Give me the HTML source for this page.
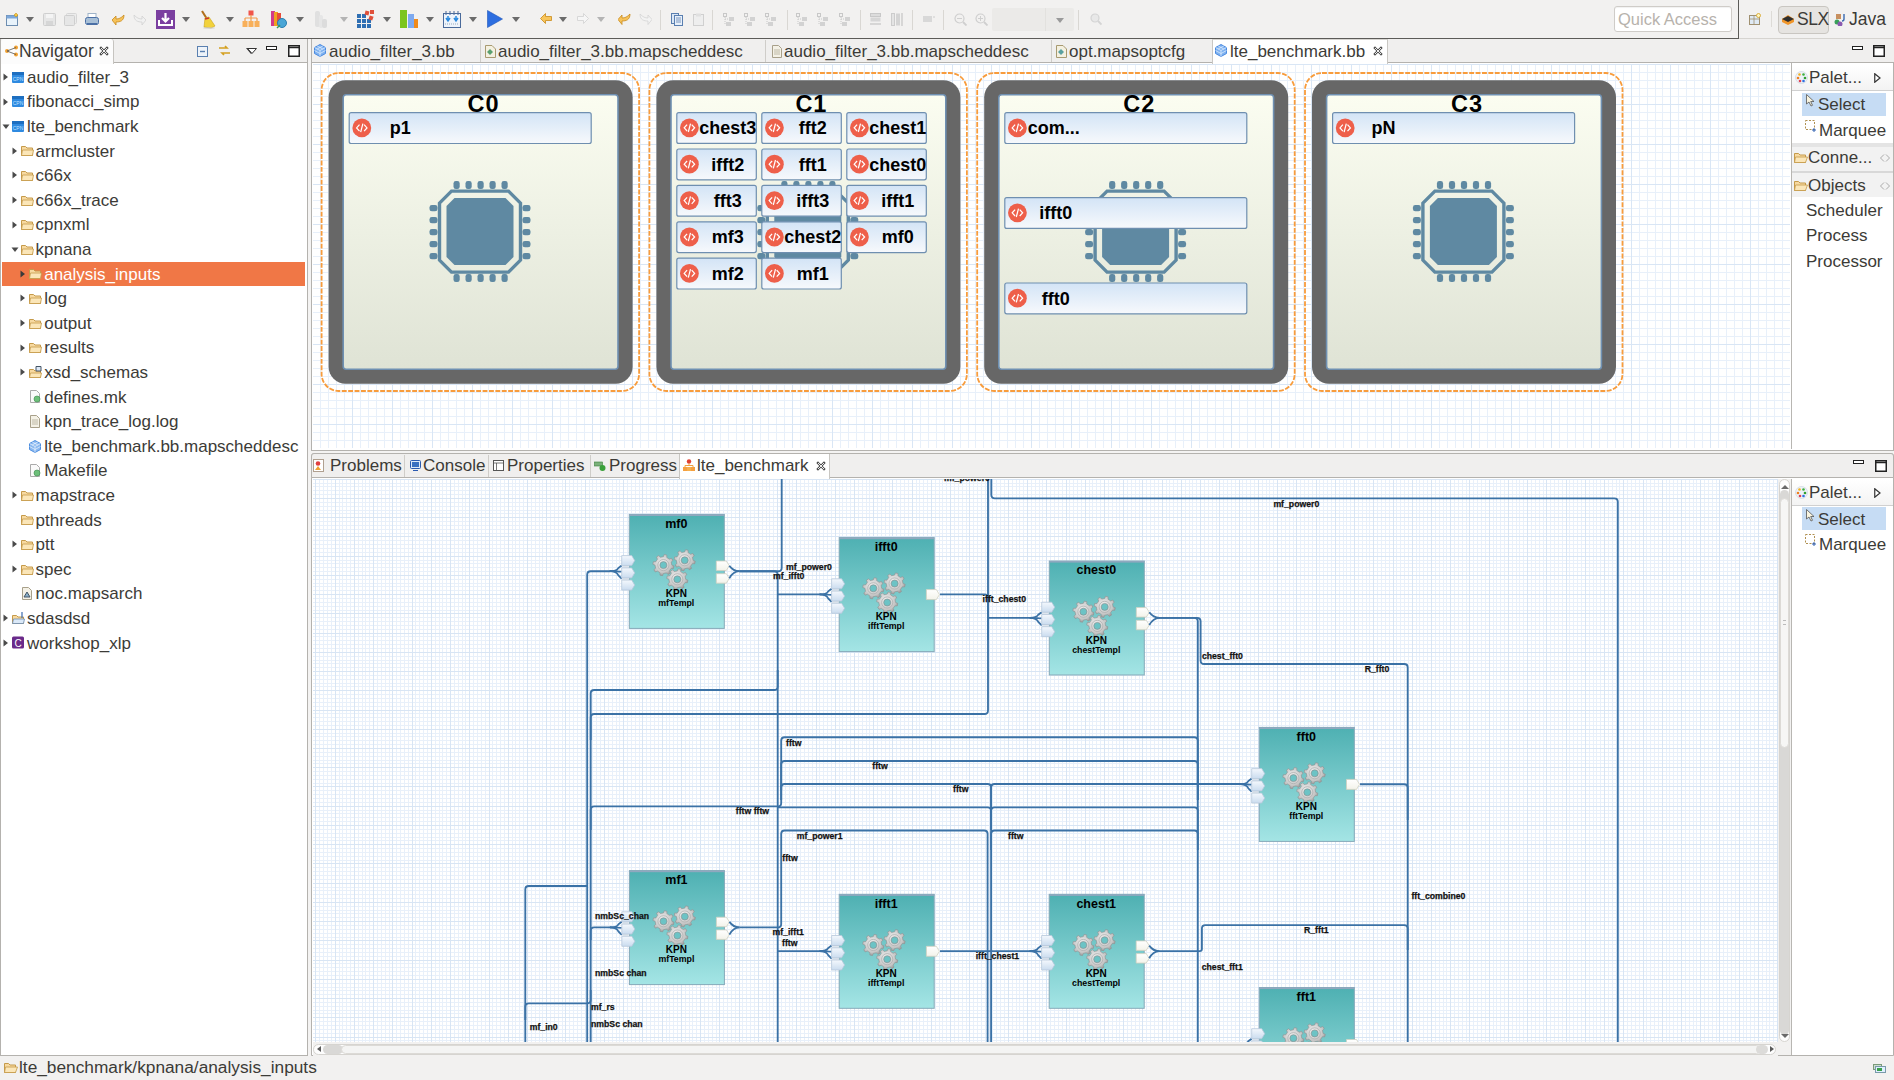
<!DOCTYPE html><html><head><meta charset="utf-8"><style>
*{box-sizing:border-box;margin:0;padding:0}
html,body{width:1894px;height:1080px;overflow:hidden;background:#f2f1f0;font-family:"Liberation Sans",sans-serif;color:#3c3b37}
.a{position:absolute}
.t{position:absolute;white-space:nowrap;line-height:1}
.ui{font-size:17.5px;color:#3c3b37}
.dd{position:absolute;width:0;height:0;border-left:4px solid transparent;border-right:4px solid transparent;border-top:5px solid #6b6b6b}
.sep{position:absolute;width:1px;top:10px;height:20px;background:#d9d7d3}
</style></head><body>
<div class="a" style="left:0;top:0;width:1894px;height:38px;background:#f2f1f0"></div>
<div class="a" style="left:0;top:38px;width:1739px;height:1px;background:#5c5b58"></div>
<div class="a" style="left:1738px;top:0;width:1px;height:39px;background:#5c5b58"></div>
<div class="a" style="left:1739px;top:38px;width:1155px;height:1px;background:#d6d4d0"></div>
<svg class="a" style="left:6px;top:13px" width="14" height="13" viewBox="0 0 14 13"><rect x="0.5" y="2.5" width="11" height="10" fill="#e9f3fb" stroke="#6d8db0"/><rect x="0.5" y="2.5" width="11" height="3" fill="#7da7d9"/><path d="M10 0 l2 2 l-2 2 l-2 -2z" fill="#f5c542" stroke="#b8860b" stroke-width="0.5"/></svg>
<div class="dd" style="left:26px;top:17px;border-top-color:#6b6b6b"></div>
<svg class="a" style="left:43px;top:13px" width="13" height="13" viewBox="0 0 13 13"><rect x="0.5" y="0.5" width="12" height="12" rx="1" fill="#e6e6e6" stroke="#cfcfcf"/><rect x="3" y="1" width="7" height="4" fill="#f4f4f4"/><rect x="3" y="8" width="7" height="4" fill="#d6d6d6"/></svg>
<svg class="a" style="left:64px;top:13px" width="13" height="13" viewBox="0 0 13 13"><rect x="2.5" y="0.5" width="10" height="10" rx="1" fill="#ececec" stroke="#d6d6d6"/><rect x="0.5" y="2.5" width="10" height="10" rx="1" fill="#e6e6e6" stroke="#cfcfcf"/></svg>
<svg class="a" style="left:85px;top:13px" width="14" height="13" viewBox="0 0 14 13"><rect x="3" y="0.5" width="8" height="5" fill="#fff" stroke="#9fb3c8"/><rect x="0.5" y="4.5" width="13" height="7" rx="2" fill="#a8bfd6" stroke="#4a6fa5"/><rect x="2" y="10" width="10" height="2" fill="#4a6fa5"/></svg>
<svg class="a" style="left:112px;top:14px" width="13" height="11" viewBox="0 0 13 11"><path d="M12 1 C12 7 8 8 4 8 L4 11 L0 6 L4 2 L4 5 C7 5 9 4 12 1z" fill="#f6c25a" stroke="#c98a1b" stroke-width="0.8"/></svg>
<svg class="a" style="left:133px;top:14px" width="13" height="11" viewBox="0 0 13 11"><path d="M1 1 C1 7 5 8 9 8 L9 11 L13 6 L9 2 L9 5 C6 5 4 4 1 1z" fill="#f1f1f1" stroke="#d2d2d2" stroke-width="0.8"/></svg>
<svg class="a" style="left:156px;top:10px" width="19" height="19" viewBox="0 0 19 19"><rect width="19" height="19" fill="#7b3fa0"/><path d="M3 10 V15 H16 V10" fill="none" stroke="#fff" stroke-width="2"/><path d="M9.5 3 V11 M6 8 L9.5 11.5 L13 8" fill="none" stroke="#fff" stroke-width="2.2"/></svg>
<div class="dd" style="left:182px;top:17px;border-top-color:#6b6b6b"></div>
<svg class="a" style="left:199px;top:10px" width="17" height="19" viewBox="0 0 17 19"><path d="M3 1 L8 9" stroke="#b0701c" stroke-width="2"/><path d="M6 8 L10 7 L16 16 L12 18 L5 17z" fill="#f2d23c" stroke="#c7a21a" stroke-width="0.6"/><path d="M6 9 L10 8" stroke="#c83232" stroke-width="1.6"/><ellipse cx="10" cy="18" rx="6" ry="1" fill="#ccc" opacity="0.6"/></svg>
<div class="dd" style="left:226px;top:17px;border-top-color:#6b6b6b"></div>
<svg class="a" style="left:242px;top:10px" width="18" height="18" viewBox="0 0 18 18"><rect x="6.5" y="0.5" width="5" height="5" fill="#f0554a"/><path d="M9 5 V8 M3 8 H15 M3 8 V11 M9 8 V11 M15 8 V11" stroke="#f29b4a" stroke-width="1.2" fill="none"/><rect x="0.5" y="11" width="5" height="6" fill="#f8b05a"/><rect x="6.5" y="11" width="5" height="6" fill="#f8b05a"/><rect x="12.5" y="11" width="5" height="6" fill="#f8b05a"/></svg>
<svg class="a" style="left:270px;top:10px" width="17" height="19" viewBox="0 0 17 19"><rect x="1" y="1" width="4" height="15" fill="#d23a8a"/><rect x="4" y="2" width="4" height="14" fill="#f0a020"/><rect x="7" y="3" width="4" height="12" fill="#e84b3a"/><circle cx="12" cy="13" r="4.5" fill="#4aa6d6" stroke="#2a7fb0"/><path d="M7 18 L10 15" stroke="#3a9a5a" stroke-width="1.5"/></svg>
<div class="dd" style="left:296px;top:17px;border-top-color:#6b6b6b"></div>
<svg class="a" style="left:314px;top:10px" width="14" height="19" viewBox="0 0 14 19"><rect x="1" y="1" width="5" height="16" rx="2" fill="#e0e0e0"/><rect x="5" y="5" width="4" height="13" rx="2" fill="#e6e6e6"/><rect x="8" y="9" width="5" height="9" rx="2" fill="#dcdcdc"/></svg>
<div class="dd" style="left:340px;top:17px;border-top-color:#b4b4b4"></div>
<svg class="a" style="left:357px;top:10px" width="17" height="18" viewBox="0 0 17 18"><g fill="#2f6fb3"><rect x="0" y="4" width="4" height="4"/><rect x="5" y="4" width="4" height="4"/><rect x="0" y="9" width="4" height="4"/><rect x="5" y="9" width="4" height="4"/><rect x="10" y="9" width="4" height="4"/><rect x="0" y="14" width="4" height="4"/><rect x="5" y="14" width="4" height="4"/><rect x="10" y="14" width="4" height="4"/></g><g fill="#e0503a"><rect x="8" y="1" width="4" height="4" transform="rotate(15 10 3)"/><rect x="13" y="0" width="4" height="4"/><rect x="12" y="6" width="4" height="4" transform="rotate(20 14 8)"/></g></svg>
<div class="dd" style="left:383px;top:17px;border-top-color:#6b6b6b"></div>
<svg class="a" style="left:400px;top:10px" width="18" height="19" viewBox="0 0 18 19"><rect x="0" y="0" width="7" height="18" fill="#7cc51e"/><rect x="8" y="4" width="6" height="14" fill="#7eaaf0"/><rect x="14" y="9" width="4" height="9" fill="#f08a1a"/></svg>
<div class="dd" style="left:426px;top:17px;border-top-color:#6b6b6b"></div>
<svg class="a" style="left:443px;top:10px" width="18" height="18" viewBox="0 0 18 18"><rect x="0.5" y="3.5" width="17" height="14" fill="#eef4fb" stroke="#4a6a9a"/><path d="M3 1 V5 M7 1 V5 M11 1 V5 M15 1 V5" stroke="#4a6a9a"/><path d="M5 6 V10 M3 8 L5 11 L7 8 M13 6 V10 M11 8 L13 11 L15 8" stroke="#2a8ae0" stroke-width="1.5" fill="none"/><path d="M2 14 H16" stroke="#9ab" stroke-dasharray="1 1"/></svg>
<div class="dd" style="left:469px;top:17px;border-top-color:#6b6b6b"></div>
<svg class="a" style="left:487px;top:10px" width="16" height="18" viewBox="0 0 16 18"><path d="M0.5 0.5 L15.5 9 L0.5 17.5z" fill="#2d6ee0" stroke="#1f55b8" stroke-width="0.6"/></svg>
<div class="dd" style="left:512px;top:17px;border-top-color:#6b6b6b"></div>
<svg class="a" style="left:540px;top:13px" width="12" height="11" viewBox="0 0 12 11"><path d="M0.5 5.5 L5.5 0.5 V3.5 H11.5 V7.5 H5.5 V10.5z" fill="#f8c55a" stroke="#c98a1b" stroke-width="0.8"/></svg>
<div class="dd" style="left:559px;top:17px;border-top-color:#6b6b6b"></div>
<svg class="a" style="left:577px;top:13px" width="12" height="11" viewBox="0 0 12 11"><path d="M11.5 5.5 L6.5 0.5 V3.5 H0.5 V7.5 H6.5 V10.5z" fill="#f6f6f6" stroke="#d0d0d0" stroke-width="0.8"/></svg>
<div class="dd" style="left:597px;top:17px;border-top-color:#b4b4b4"></div>
<svg class="a" style="left:618px;top:13px" width="13" height="12" viewBox="0 0 13 12"><path d="M12 1 C12 7 8 8 4 8 L4 11.5 L0 6.5 L4 2 L4 5 C7 5 9 4 12 1z" fill="#f6c25a" stroke="#c98a1b" stroke-width="0.8"/></svg>
<svg class="a" style="left:639px;top:13px" width="13" height="12" viewBox="0 0 13 12"><path d="M1 1 C1 7 5 8 9 8 L9 11.5 L13 6.5 L9 2 L9 5 C6 5 4 4 1 1z" fill="#f3f3f3" stroke="#d4d4d4" stroke-width="0.8"/></svg>
<div class="sep" style="left:660px"></div>
<svg class="a" style="left:671px;top:13px" width="12" height="13" viewBox="0 0 12 13"><rect x="0.5" y="0.5" width="7" height="10" fill="#dbe7f5" stroke="#5a7fb0"/><rect x="3.5" y="2.5" width="8" height="10" fill="#e8f0fa" stroke="#5a7fb0"/><path d="M5 5 H10 M5 7 H10 M5 9 H10" stroke="#5a7fb0" stroke-width="0.8"/></svg>
<svg class="a" style="left:693px;top:13px" width="11" height="13" viewBox="0 0 11 13"><rect x="0.5" y="1.5" width="10" height="11" fill="#eeeeee" stroke="#d0d0d0"/><rect x="3" y="0.5" width="5" height="3" fill="#e0e0e0"/></svg>
<div class="sep" style="left:712px"></div>
<svg class="a" style="left:723px;top:13px" width="12" height="13" viewBox="0 0 12 13"><rect x="0.5" y="0.5" width="3" height="3" fill="none" stroke="#c8c8c8"/><rect x="6" y="4" width="5" height="4" fill="#d2d2d2"/><rect x="3" y="9" width="5" height="4" fill="#d2d2d2"/><path d="M2 6 H6 M2 4 V12" stroke="#c8c8c8" stroke-dasharray="1 1"/></svg>
<svg class="a" style="left:744px;top:13px" width="12" height="13" viewBox="0 0 12 13"><rect x="0.5" y="0.5" width="3" height="3" fill="none" stroke="#c8c8c8"/><rect x="6" y="4" width="5" height="4" fill="#d2d2d2"/><rect x="3" y="9" width="5" height="4" fill="#d2d2d2"/><path d="M2 6 H6 M2 4 V12" stroke="#c8c8c8" stroke-dasharray="1 1"/></svg>
<svg class="a" style="left:765px;top:13px" width="12" height="13" viewBox="0 0 12 13"><rect x="0.5" y="0.5" width="3" height="3" fill="none" stroke="#c8c8c8"/><rect x="6" y="4" width="5" height="4" fill="#d2d2d2"/><rect x="3" y="9" width="5" height="4" fill="#d2d2d2"/><path d="M2 6 H6 M2 4 V12" stroke="#c8c8c8" stroke-dasharray="1 1"/></svg>
<svg class="a" style="left:796px;top:13px" width="12" height="13" viewBox="0 0 12 13"><rect x="0.5" y="0.5" width="3" height="3" fill="none" stroke="#c8c8c8"/><rect x="6" y="4" width="5" height="4" fill="#d2d2d2"/><rect x="3" y="9" width="5" height="4" fill="#d2d2d2"/><path d="M2 6 H6 M2 4 V12" stroke="#c8c8c8" stroke-dasharray="1 1"/></svg>
<svg class="a" style="left:817px;top:13px" width="12" height="13" viewBox="0 0 12 13"><rect x="0.5" y="0.5" width="3" height="3" fill="none" stroke="#c8c8c8"/><rect x="6" y="4" width="5" height="4" fill="#d2d2d2"/><rect x="3" y="9" width="5" height="4" fill="#d2d2d2"/><path d="M2 6 H6 M2 4 V12" stroke="#c8c8c8" stroke-dasharray="1 1"/></svg>
<svg class="a" style="left:839px;top:13px" width="12" height="13" viewBox="0 0 12 13"><rect x="0.5" y="0.5" width="3" height="3" fill="none" stroke="#c8c8c8"/><rect x="6" y="4" width="5" height="4" fill="#d2d2d2"/><rect x="3" y="9" width="5" height="4" fill="#d2d2d2"/><path d="M2 6 H6 M2 4 V12" stroke="#c8c8c8" stroke-dasharray="1 1"/></svg>
<div class="sep" style="left:787px"></div>
<div class="sep" style="left:860px"></div>
<svg class="a" style="left:870px;top:13px" width="11" height="13" viewBox="0 0 11 13"><rect x="0.5" y="0.5" width="10" height="3" fill="#dcdcdc" stroke="#c8c8c8"/><rect x="0.5" y="4.5" width="10" height="4" fill="#d6d6d6"/><path d="M0 11 H11" stroke="#bbb"/></svg>
<svg class="a" style="left:891px;top:13px" width="12" height="13" viewBox="0 0 12 13"><rect x="0.5" y="0.5" width="3" height="12" fill="#e4e4e4" stroke="#ccc"/><rect x="5" y="0.5" width="4" height="12" fill="#d4d4d4"/><path d="M11 0 V13" stroke="#bbb"/></svg>
<div class="sep" style="left:912px"></div>
<svg class="a" style="left:923px;top:16px" width="12" height="6" viewBox="0 0 12 6"><rect x="0" y="0" width="9" height="6" fill="#d8d8d8"/><path d="M10 1 H12" stroke="#ccc"/></svg>
<div class="sep" style="left:943px"></div>
<svg class="a" style="left:954px;top:13px" width="13" height="13" viewBox="0 0 13 13"><circle cx="5.5" cy="5.5" r="4.5" fill="none" stroke="#cfcfcf" stroke-width="1.2"/><path d="M3 5.5 H8" stroke="#cfcfcf"/><path d="M9 9 L12.5 12.5" stroke="#cfcfcf" stroke-width="1.8"/></svg>
<svg class="a" style="left:975px;top:13px" width="13" height="13" viewBox="0 0 13 13"><circle cx="5.5" cy="5.5" r="4.5" fill="none" stroke="#cfcfcf" stroke-width="1.2"/><path d="M3 5.5 H8 M5.5 3 V8" stroke="#cfcfcf"/><path d="M9 9 L12.5 12.5" stroke="#cfcfcf" stroke-width="1.8"/></svg>
<div class="a" style="left:992px;top:8px;width:82px;height:23px;background:#ebeae8;border-radius:2px"></div>
<div class="a" style="left:1045px;top:8px;width:1px;height:23px;background:#e2e1de"></div>
<div class="dd" style="left:1056px;top:18px;border-top-color:#9a9a9a"></div>
<div class="sep" style="left:1078px"></div>
<svg class="a" style="left:1090px;top:13px" width="12" height="13" viewBox="0 0 12 13"><circle cx="5" cy="5" r="4" fill="#e8e8e8" stroke="#d4d4d4" stroke-width="1.2"/><path d="M8 8 L11.5 11.5" stroke="#d4d4d4" stroke-width="1.8"/></svg>
<div class="a" style="left:1614px;top:6px;width:118px;height:26px;background:#fff;border:1px solid #cfccc8;border-radius:3px;box-shadow:inset 0 1px 1px rgba(0,0,0,0.06)"></div>
<div class="t" style="left:1618px;top:11px;font-size:16.5px;color:#b7b2ac">Quick Access</div>
<svg class="a" style="left:1749px;top:13px" width="12" height="12" viewBox="0 0 12 12"><rect x="0.5" y="2.5" width="10" height="9" fill="#dfeaf5" stroke="#a09070"/><path d="M0.5 6 H10.5 M5 2.5 V11.5" stroke="#a09070" stroke-width="0.8"/><circle cx="9.5" cy="2.5" r="2" fill="#fff6c0" stroke="#d4a020" stroke-width="0.8"/></svg>
<div class="a" style="left:1771px;top:11px;width:1px;height:16px;background:#dddbd7"></div>
<div class="a" style="left:1778px;top:6px;width:51px;height:28px;background:#e6e4e1;border:1px solid #c9c6c1;border-radius:4px"></div>
<svg class="a" style="left:1782px;top:15px" width="12" height="10" viewBox="0 0 12 10"><path d="M0 4 L6 0 L12 4 L12 7 L6 10 L0 7z" fill="#f0962a"/><path d="M0 4 L6 1 L12 4 L6 7z" fill="#2e2e2e"/></svg>
<div class="t" style="left:1797px;top:11px;font-size:17.5px;color:#3c3b37;letter-spacing:-0.5px">SLX</div>
<svg class="a" style="left:1834px;top:13px" width="12" height="13" viewBox="0 0 12 13"><circle cx="3" cy="9" r="2.5" fill="#3aa05a"/><circle cx="6" cy="11" r="2.5" fill="#8a5ab0"/><rect x="2" y="1" width="5" height="5" fill="#c89060"/><path d="M10 1 V6 Q10 8 8 8" stroke="#3a6ab0" stroke-width="1.4" fill="none"/></svg>
<div class="t" style="left:1849px;top:11px;font-size:17.5px;color:#3c3b37">Java</div>
<div class="a" style="left:0;top:39px;width:308px;height:1017px;background:#fff;border-right:1px solid #b4b2ae;border-left:1px solid #b4b2ae;border-bottom:1px solid #b4b2ae"></div>
<div class="a" style="left:0;top:39px;width:308px;height:24px;background:#f0efee;border-bottom:1px solid #b4b2ae;border-left:1px solid #b4b2ae;border-right:1px solid #b4b2ae"></div>
<div class="a" style="left:1px;top:39px;width:113px;height:25px;background:#fcfcfc;border-right:1px solid #c6c4c0;border-radius:3px 3px 0 0"></div>
<svg class="a" style="left:4px;top:45px" width="15" height="12" viewBox="0 0 15 12"><circle cx="3" cy="6" r="2" fill="#f0a030"/><circle cx="12" cy="2.5" r="2" fill="#f0a030"/><circle cx="12" cy="9.5" r="2" fill="#f0a030"/><path d="M3 6 L12 2.5 M3 6 L12 9.5" stroke="#555" stroke-width="0.8"/></svg>
<div class="t ui" style="left:19px;top:43px;font-size:17.5px">Navigator</div>
<svg class="a" style="left:99px;top:46px" width="10" height="10" viewBox="0 0 10 10"><path d="M2 2 L8 8 M8 2 L2 8" stroke="#4a4a4a" stroke-width="2.4" stroke-linecap="square"/><path d="M2 2 L8 8 M8 2 L2 8" stroke="#fff" stroke-width="0.9" /></svg>
<svg class="a" style="left:197px;top:46px" width="11" height="11" viewBox="0 0 11 11"><rect x="0.5" y="0.5" width="10" height="10" fill="#eef3f9" stroke="#5a80b0"/><path d="M3 5.5 H8" stroke="#5a80b0" stroke-width="1.4"/></svg>
<svg class="a" style="left:218px;top:44px" width="13" height="13" viewBox="0 0 13 13"><path d="M1 4 H9 L7 2 M12 9 H4 L6 11" stroke="#d4a020" stroke-width="1.6" fill="none"/></svg>
<div class="dd" style="left:246px;top:48px;border-left-width:5px;border-right-width:5px;border-top:6px solid #333;"></div>
<svg class="a" style="left:247px;top:48px" width="10" height="6" viewBox="0 0 10 6"><path d="M0.5 0.5 H9.5 L5 5.5z" fill="#fff" stroke="#333"/></svg>
<svg class="a" style="left:266px;top:46px" width="11" height="4" viewBox="0 0 11 4"><rect x="0.5" y="0.5" width="10" height="3" fill="#fff" stroke="#222"/></svg>
<svg class="a" style="left:288px;top:45px" width="12" height="12" viewBox="0 0 12 12"><rect x="0.75" y="0.75" width="10.5" height="10.5" fill="#fff" stroke="#222" stroke-width="1.5"/><path d="M1 2.5 H11" stroke="#222" stroke-width="1.5"/></svg>
<svg class="a" style="left:3.0px;top:73.0px" width="6" height="8"><path d="M0.5 0.5 L5 4 L0.5 7.5z" fill="#4a4a4a"/></svg>
<svg class="a" style="left:12.0px;top:70.5px" width="13" height="13"><rect x="0" y="1" width="12" height="11" rx="1" fill="#2f8ae0"/><rect x="0" y="1" width="12" height="3" fill="#1e6fc0"/><text x="6" y="9.5" font-size="5" fill="#bfe0ff" text-anchor="middle" font-family="Liberation Sans">CPN</text></svg>
<div class="t ui" style="left:27.0px;top:68.7px;color:#3c3b37;font-size:17px">audio_filter_3</div>
<svg class="a" style="left:3.0px;top:97.6px" width="6" height="8"><path d="M0.5 0.5 L5 4 L0.5 7.5z" fill="#4a4a4a"/></svg>
<svg class="a" style="left:12.0px;top:95.1px" width="13" height="13"><rect x="0" y="1" width="12" height="11" rx="1" fill="#2f8ae0"/><rect x="0" y="1" width="12" height="3" fill="#1e6fc0"/><text x="6" y="9.5" font-size="5" fill="#bfe0ff" text-anchor="middle" font-family="Liberation Sans">CPN</text></svg>
<div class="t ui" style="left:27.0px;top:93.3px;color:#3c3b37;font-size:17px">fibonacci_simp</div>
<svg class="a" style="left:2.0px;top:124.2px" width="8" height="6"><path d="M0.5 0.5 H7.5 L4 5z" fill="#4a4a4a"/></svg>
<svg class="a" style="left:12.0px;top:119.7px" width="13" height="13"><rect x="0" y="1" width="12" height="11" rx="1" fill="#2f8ae0"/><rect x="0" y="1" width="12" height="3" fill="#1e6fc0"/><text x="6" y="9.5" font-size="5" fill="#bfe0ff" text-anchor="middle" font-family="Liberation Sans">CPN</text></svg>
<div class="t ui" style="left:27.0px;top:117.9px;color:#3c3b37;font-size:17px">lte_benchmark</div>
<svg class="a" style="left:11.6px;top:146.8px" width="6" height="8"><path d="M0.5 0.5 L5 4 L0.5 7.5z" fill="#4a4a4a"/></svg>
<svg class="a" style="left:20.6px;top:144.3px" width="13" height="13"><path d="M0.5 2.5 H4.5 L6 4 H11.5 V11.5 H0.5z" fill="#f7d9a0" stroke="#c59a4a"/><path d="M1.5 6 H12.5 L11.5 11.5 H0.5z" fill="#fbe6b8" stroke="#c59a4a" stroke-width="0.8"/></svg>
<div class="t ui" style="left:35.6px;top:142.5px;color:#3c3b37;font-size:17px">armcluster</div>
<svg class="a" style="left:11.6px;top:171.4px" width="6" height="8"><path d="M0.5 0.5 L5 4 L0.5 7.5z" fill="#4a4a4a"/></svg>
<svg class="a" style="left:20.6px;top:168.9px" width="13" height="13"><path d="M0.5 2.5 H4.5 L6 4 H11.5 V11.5 H0.5z" fill="#f7d9a0" stroke="#c59a4a"/><path d="M1.5 6 H12.5 L11.5 11.5 H0.5z" fill="#fbe6b8" stroke="#c59a4a" stroke-width="0.8"/></svg>
<div class="t ui" style="left:35.6px;top:167.1px;color:#3c3b37;font-size:17px">c66x</div>
<svg class="a" style="left:11.6px;top:196.0px" width="6" height="8"><path d="M0.5 0.5 L5 4 L0.5 7.5z" fill="#4a4a4a"/></svg>
<svg class="a" style="left:20.6px;top:193.5px" width="13" height="13"><path d="M0.5 2.5 H4.5 L6 4 H11.5 V11.5 H0.5z" fill="#f7d9a0" stroke="#c59a4a"/><path d="M1.5 6 H12.5 L11.5 11.5 H0.5z" fill="#fbe6b8" stroke="#c59a4a" stroke-width="0.8"/></svg>
<div class="t ui" style="left:35.6px;top:191.7px;color:#3c3b37;font-size:17px">c66x_trace</div>
<svg class="a" style="left:11.6px;top:220.6px" width="6" height="8"><path d="M0.5 0.5 L5 4 L0.5 7.5z" fill="#4a4a4a"/></svg>
<svg class="a" style="left:20.6px;top:218.1px" width="13" height="13"><path d="M0.5 2.5 H4.5 L6 4 H11.5 V11.5 H0.5z" fill="#f7d9a0" stroke="#c59a4a"/><path d="M1.5 6 H12.5 L11.5 11.5 H0.5z" fill="#fbe6b8" stroke="#c59a4a" stroke-width="0.8"/></svg>
<div class="t ui" style="left:35.6px;top:216.3px;color:#3c3b37;font-size:17px">cpnxml</div>
<svg class="a" style="left:10.6px;top:247.2px" width="8" height="6"><path d="M0.5 0.5 H7.5 L4 5z" fill="#4a4a4a"/></svg>
<svg class="a" style="left:20.6px;top:242.7px" width="13" height="13"><path d="M0.5 2.5 H4.5 L6 4 H11.5 V11.5 H0.5z" fill="#f7d9a0" stroke="#c59a4a"/><path d="M1.5 6 H12.5 L11.5 11.5 H0.5z" fill="#fbe6b8" stroke="#c59a4a" stroke-width="0.8"/></svg>
<div class="t ui" style="left:35.6px;top:240.9px;color:#3c3b37;font-size:17px">kpnana</div>
<div class="a" style="left:2px;top:261.6px;width:303px;height:24.4px;background:#f07746"></div>
<svg class="a" style="left:20.2px;top:269.8px" width="6" height="8"><path d="M0.5 0.5 L5 4 L0.5 7.5z" fill="#3a3a3a"/></svg>
<svg class="a" style="left:29.2px;top:267.3px" width="13" height="13"><path d="M0.5 2.5 H4.5 L6 4 H11.5 V11.5 H0.5z" fill="#f7d9a0" stroke="#c59a4a"/><path d="M1.5 6 H12.5 L11.5 11.5 H0.5z" fill="#fbe6b8" stroke="#c59a4a" stroke-width="0.8"/></svg>
<div class="t ui" style="left:44.2px;top:265.5px;color:#ffffff;font-size:17px">analysis_inputs</div>
<svg class="a" style="left:20.2px;top:294.4px" width="6" height="8"><path d="M0.5 0.5 L5 4 L0.5 7.5z" fill="#4a4a4a"/></svg>
<svg class="a" style="left:29.2px;top:291.9px" width="13" height="13"><path d="M0.5 2.5 H4.5 L6 4 H11.5 V11.5 H0.5z" fill="#f7d9a0" stroke="#c59a4a"/><path d="M1.5 6 H12.5 L11.5 11.5 H0.5z" fill="#fbe6b8" stroke="#c59a4a" stroke-width="0.8"/></svg>
<div class="t ui" style="left:44.2px;top:290.1px;color:#3c3b37;font-size:17px">log</div>
<svg class="a" style="left:20.2px;top:319.0px" width="6" height="8"><path d="M0.5 0.5 L5 4 L0.5 7.5z" fill="#4a4a4a"/></svg>
<svg class="a" style="left:29.2px;top:316.5px" width="13" height="13"><path d="M0.5 2.5 H4.5 L6 4 H11.5 V11.5 H0.5z" fill="#f7d9a0" stroke="#c59a4a"/><path d="M1.5 6 H12.5 L11.5 11.5 H0.5z" fill="#fbe6b8" stroke="#c59a4a" stroke-width="0.8"/></svg>
<div class="t ui" style="left:44.2px;top:314.7px;color:#3c3b37;font-size:17px">output</div>
<svg class="a" style="left:20.2px;top:343.6px" width="6" height="8"><path d="M0.5 0.5 L5 4 L0.5 7.5z" fill="#4a4a4a"/></svg>
<svg class="a" style="left:29.2px;top:341.1px" width="13" height="13"><path d="M0.5 2.5 H4.5 L6 4 H11.5 V11.5 H0.5z" fill="#f7d9a0" stroke="#c59a4a"/><path d="M1.5 6 H12.5 L11.5 11.5 H0.5z" fill="#fbe6b8" stroke="#c59a4a" stroke-width="0.8"/></svg>
<div class="t ui" style="left:44.2px;top:339.3px;color:#3c3b37;font-size:17px">results</div>
<svg class="a" style="left:20.2px;top:368.2px" width="6" height="8"><path d="M0.5 0.5 L5 4 L0.5 7.5z" fill="#4a4a4a"/></svg>
<svg class="a" style="left:29.2px;top:365.7px" width="13" height="13"><path d="M0.5 3.5 H4.5 L6 5 H11.5 V11.5 H0.5z" fill="#f7d9a0" stroke="#c59a4a"/><path d="M1.5 7 H12.5 L11.5 11.5 H0.5z" fill="#fbe6b8" stroke="#c59a4a" stroke-width="0.8"/><path d="M7 0.5 H12 V5 H7z" fill="#dde8f5" stroke="#456"/></svg>
<div class="t ui" style="left:44.2px;top:363.9px;color:#3c3b37;font-size:17px">xsd_schemas</div>
<svg class="a" style="left:29.2px;top:390.3px" width="13" height="13"><path d="M1.5 0.5 H7.5 L10.5 3.5 V12.5 H1.5z" fill="#fafafa" stroke="#aaa"/><circle cx="8" cy="9" r="3" fill="#6dbf7a" stroke="#3a8a4a" stroke-width="0.6"/></svg>
<div class="t ui" style="left:44.2px;top:388.5px;color:#3c3b37;font-size:17px">defines.mk</div>
<svg class="a" style="left:29.2px;top:414.9px" width="13" height="13"><path d="M1.5 0.5 H7.5 L10.5 3.5 V12.5 H1.5z" fill="#f4f1e6" stroke="#a8a08a"/><path d="M3 5 H9 M3 7 H9 M3 9 H9" stroke="#a8a08a" stroke-width="0.7"/></svg>
<div class="t ui" style="left:44.2px;top:413.1px;color:#3c3b37;font-size:17px">kpn_trace_log.log</div>
<svg class="a" style="left:29.2px;top:439.5px" width="13" height="13"><path d="M6 0.5 L11.5 3.5 V9.5 L6 12.5 L0.5 9.5 V3.5z" fill="#8ab8f0" stroke="#5090e0"/><path d="M0.5 3.5 L6 6.5 L11.5 3.5 M6 6.5 V12.5 M3.2 2 L8.8 5 M8.8 2 L3.2 5 M0.5 6.5 L6 9.5 L11.5 6.5" stroke="#fff" stroke-width="0.6" fill="none"/></svg>
<div class="t ui" style="left:44.2px;top:437.7px;color:#3c3b37;font-size:17px">lte_benchmark.bb.mapscheddesc</div>
<svg class="a" style="left:29.2px;top:464.1px" width="13" height="13"><path d="M1.5 0.5 H7.5 L10.5 3.5 V12.5 H1.5z" fill="#fafafa" stroke="#aaa"/><circle cx="8" cy="9" r="3" fill="#6dbf7a" stroke="#3a8a4a" stroke-width="0.6"/></svg>
<div class="t ui" style="left:44.2px;top:462.3px;color:#3c3b37;font-size:17px">Makefile</div>
<svg class="a" style="left:11.6px;top:491.2px" width="6" height="8"><path d="M0.5 0.5 L5 4 L0.5 7.5z" fill="#4a4a4a"/></svg>
<svg class="a" style="left:20.6px;top:488.7px" width="13" height="13"><path d="M0.5 2.5 H4.5 L6 4 H11.5 V11.5 H0.5z" fill="#f7d9a0" stroke="#c59a4a"/><path d="M1.5 6 H12.5 L11.5 11.5 H0.5z" fill="#fbe6b8" stroke="#c59a4a" stroke-width="0.8"/></svg>
<div class="t ui" style="left:35.6px;top:486.9px;color:#3c3b37;font-size:17px">mapstrace</div>
<svg class="a" style="left:20.6px;top:513.3px" width="13" height="13"><path d="M0.5 2.5 H4.5 L6 4 H11.5 V11.5 H0.5z" fill="#f7d9a0" stroke="#c59a4a"/><path d="M1.5 6 H12.5 L11.5 11.5 H0.5z" fill="#fbe6b8" stroke="#c59a4a" stroke-width="0.8"/></svg>
<div class="t ui" style="left:35.6px;top:511.5px;color:#3c3b37;font-size:17px">pthreads</div>
<svg class="a" style="left:11.6px;top:540.4px" width="6" height="8"><path d="M0.5 0.5 L5 4 L0.5 7.5z" fill="#4a4a4a"/></svg>
<svg class="a" style="left:20.6px;top:537.9px" width="13" height="13"><path d="M0.5 2.5 H4.5 L6 4 H11.5 V11.5 H0.5z" fill="#f7d9a0" stroke="#c59a4a"/><path d="M1.5 6 H12.5 L11.5 11.5 H0.5z" fill="#fbe6b8" stroke="#c59a4a" stroke-width="0.8"/></svg>
<div class="t ui" style="left:35.6px;top:536.1px;color:#3c3b37;font-size:17px">ptt</div>
<svg class="a" style="left:11.6px;top:565.0px" width="6" height="8"><path d="M0.5 0.5 L5 4 L0.5 7.5z" fill="#4a4a4a"/></svg>
<svg class="a" style="left:20.6px;top:562.5px" width="13" height="13"><path d="M0.5 2.5 H4.5 L6 4 H11.5 V11.5 H0.5z" fill="#f7d9a0" stroke="#c59a4a"/><path d="M1.5 6 H12.5 L11.5 11.5 H0.5z" fill="#fbe6b8" stroke="#c59a4a" stroke-width="0.8"/></svg>
<div class="t ui" style="left:35.6px;top:560.7px;color:#3c3b37;font-size:17px">spec</div>
<svg class="a" style="left:20.6px;top:587.1px" width="13" height="13"><path d="M1.5 0.5 H7.5 L10.5 3.5 V12.5 H1.5z" fill="#f4f1e6" stroke="#a8a08a"/><path d="M3 10 L6 5 L9 10z" fill="#8ab0c8" stroke="#456"/></svg>
<div class="t ui" style="left:35.6px;top:585.3px;color:#3c3b37;font-size:17px">noc.mapsarch</div>
<svg class="a" style="left:3.0px;top:614.2px" width="6" height="8"><path d="M0.5 0.5 L5 4 L0.5 7.5z" fill="#4a4a4a"/></svg>
<svg class="a" style="left:12.0px;top:611.7px" width="13" height="13"><path d="M0.5 3.5 H4.5 L6 5 H11.5 V11.5 H0.5z" fill="#f7d9a0" stroke="#c59a4a"/><path d="M1.5 7 H12.5 L11.5 11.5 H0.5z" fill="#dbe9f8" stroke="#6a8ab0" stroke-width="0.8"/><path d="M10 0 V6" stroke="#3a6ab0" stroke-width="1.2"/></svg>
<div class="t ui" style="left:27.0px;top:609.9px;color:#3c3b37;font-size:17px">sdasdsd</div>
<svg class="a" style="left:3.0px;top:638.8px" width="6" height="8"><path d="M0.5 0.5 L5 4 L0.5 7.5z" fill="#4a4a4a"/></svg>
<svg class="a" style="left:12.0px;top:636.3px" width="13" height="13"><rect x="0" y="0.5" width="12" height="12" rx="1.5" fill="#6a2a8a"/><text x="6" y="10.5" font-size="10" fill="#fff" text-anchor="middle" font-family="Liberation Sans">C</text></svg>
<div class="t ui" style="left:27.0px;top:634.5px;color:#3c3b37;font-size:17px">workshop_xlp</div>
<div class="a" style="left:311px;top:39px;width:1583px;height:412px;background:#fff;border-left:1px solid #b4b2ae;border-right:1px solid #b4b2ae;border-bottom:1px solid #b4b2ae"></div>
<div class="a" style="left:311px;top:39px;width:1583px;height:24px;background:#f0efee;border-left:1px solid #b4b2ae;border-bottom:1px solid #b4b2ae"></div>
<div class="a" style="left:308px;top:39px;width:3px;height:1017px;background:#f4f3f2"></div>
<div class="a" style="left:480px;top:40px;width:1px;height:22px;background:#cfcdc9"></div>
<div class="a" style="left:765px;top:40px;width:1px;height:22px;background:#cfcdc9"></div>
<div class="a" style="left:1051px;top:40px;width:1px;height:22px;background:#cfcdc9"></div>
<div class="a" style="left:1212px;top:39px;width:176px;height:25px;background:#fff;border-left:1px solid #c9c7c3;border-right:1px solid #c9c7c3;border-top:1px solid #d8d6d2"></div>
<svg class="a" style="left:314px;top:44px" width="13" height="13" viewBox="0 0 13 13"><path d="M6 0.5 L11.5 3.5 V9.5 L6 12.5 L0.5 9.5 V3.5z" fill="#7fb2f0" stroke="#4a8ae0"/><path d="M0.5 3.5 L6 6.5 L11.5 3.5 M6 6.5 V12.5 M3.2 2 L8.8 5 M8.8 2 L3.2 5 M0.5 6.5 L6 9.5 L11.5 6.5" stroke="#e8f2ff" stroke-width="0.7" fill="none"/></svg>
<div class="t ui" style="left:329px;top:43px;font-size:17px">audio_filter_3.bb</div>
<svg class="a" style="left:485px;top:45px" width="11" height="13" viewBox="0 0 11 13"><path d="M0.5 0.5 H7 L10.5 4 V12.5 H0.5z" fill="#f4f0e0" stroke="#a89a70"/><path d="M5 4 L8 7 L5 10 L2 7z" fill="#5aa070"/></svg>
<div class="t ui" style="left:498px;top:43px;font-size:17px">audio_filter_3.bb.mapscheddesc</div>
<svg class="a" style="left:772px;top:45px" width="10" height="13" viewBox="0 0 10 13"><path d="M0.5 0.5 H6.5 L9.5 3.5 V12.5 H0.5z" fill="#f4f1e6" stroke="#a8a08a"/><path d="M2 5 H8 M2 7 H8 M2 9 H8" stroke="#a8a08a" stroke-width="0.7"/></svg>
<div class="t ui" style="left:784px;top:43px;font-size:17px">audio_filter_3.bb.mapscheddesc</div>
<svg class="a" style="left:1056px;top:45px" width="11" height="13" viewBox="0 0 11 13"><path d="M0.5 0.5 H7 L10.5 4 V12.5 H0.5z" fill="#f4f0e0" stroke="#a89a70"/><path d="M5 4 L8 7 L5 10 L2 7z" fill="#5aa0a0"/></svg>
<div class="t ui" style="left:1069px;top:43px;font-size:17px">opt.mapsoptcfg</div>
<svg class="a" style="left:1215px;top:44px" width="13" height="13" viewBox="0 0 13 13"><path d="M6 0.5 L11.5 3.5 V9.5 L6 12.5 L0.5 9.5 V3.5z" fill="#7fb2f0" stroke="#4a8ae0"/><path d="M0.5 3.5 L6 6.5 L11.5 3.5 M6 6.5 V12.5 M3.2 2 L8.8 5 M8.8 2 L3.2 5 M0.5 6.5 L6 9.5 L11.5 6.5" stroke="#e8f2ff" stroke-width="0.7" fill="none"/></svg>
<div class="t ui" style="left:1230px;top:43px;font-size:17px">lte_benchmark.bb</div>
<svg class="a" style="left:1373px;top:46px" width="10" height="10" viewBox="0 0 10 10"><path d="M2 2 L8 8 M8 2 L2 8" stroke="#4a4a4a" stroke-width="2.4" stroke-linecap="square"/><path d="M2 2 L8 8 M8 2 L2 8" stroke="#fff" stroke-width="0.9" /></svg>
<svg class="a" style="left:1852px;top:46px" width="11" height="4" viewBox="0 0 11 4"><rect x="0.5" y="0.5" width="10" height="3" fill="#fff" stroke="#222"/></svg>
<svg class="a" style="left:1873px;top:45px" width="12" height="12" viewBox="0 0 12 12"><rect x="0.75" y="0.75" width="10.5" height="10.5" fill="#fff" stroke="#222" stroke-width="1.5"/><path d="M1 2.5 H11" stroke="#222" stroke-width="1.5"/></svg>
<svg class="a" style="left:313px;top:64px;background:#fff" width="1477" height="384" shape-rendering="crispEdges"><path d="M7.5 0V384M15.5 0V384M23.5 0V384M31.5 0V384M47.5 0V384M55.5 0V384M63.5 0V384M71.5 0V384M87.5 0V384M95.5 0V384M103.5 0V384M111.5 0V384M127.5 0V384M135.5 0V384M143.5 0V384M151.5 0V384M167.5 0V384M175.5 0V384M183.5 0V384M191.5 0V384M207.5 0V384M215.5 0V384M223.5 0V384M231.5 0V384M247.5 0V384M255.5 0V384M263.5 0V384M271.5 0V384M287.5 0V384M295.5 0V384M303.5 0V384M311.5 0V384M327.5 0V384M335.5 0V384M343.5 0V384M351.5 0V384M367.5 0V384M375.5 0V384M383.5 0V384M391.5 0V384M407.5 0V384M415.5 0V384M423.5 0V384M431.5 0V384M447.5 0V384M455.5 0V384M463.5 0V384M471.5 0V384M487.5 0V384M495.5 0V384M503.5 0V384M511.5 0V384M527.5 0V384M535.5 0V384M543.5 0V384M551.5 0V384M567.5 0V384M575.5 0V384M583.5 0V384M591.5 0V384M607.5 0V384M615.5 0V384M623.5 0V384M631.5 0V384M647.5 0V384M655.5 0V384M662.5 0V384M670.5 0V384M686.5 0V384M694.5 0V384M702.5 0V384M710.5 0V384M726.5 0V384M734.5 0V384M742.5 0V384M750.5 0V384M766.5 0V384M774.5 0V384M782.5 0V384M790.5 0V384M806.5 0V384M814.5 0V384M822.5 0V384M830.5 0V384M846.5 0V384M854.5 0V384M862.5 0V384M870.5 0V384M886.5 0V384M894.5 0V384M902.5 0V384M910.5 0V384M926.5 0V384M934.5 0V384M942.5 0V384M950.5 0V384M966.5 0V384M974.5 0V384M982.5 0V384M990.5 0V384M1006.5 0V384M1014.5 0V384M1022.5 0V384M1030.5 0V384M1046.5 0V384M1054.5 0V384M1062.5 0V384M1070.5 0V384M1086.5 0V384M1094.5 0V384M1102.5 0V384M1110.5 0V384M1126.5 0V384M1134.5 0V384M1142.5 0V384M1150.5 0V384M1166.5 0V384M1174.5 0V384M1182.5 0V384M1190.5 0V384M1206.5 0V384M1214.5 0V384M1222.5 0V384M1230.5 0V384M1246.5 0V384M1254.5 0V384M1262.5 0V384M1270.5 0V384M1286.5 0V384M1294.5 0V384M1302.5 0V384M1310.5 0V384M1326.5 0V384M1334.5 0V384M1342.5 0V384M1349.5 0V384M1365.5 0V384M1373.5 0V384M1381.5 0V384M1389.5 0V384M1405.5 0V384M1413.5 0V384M1421.5 0V384M1429.5 0V384M1445.5 0V384M1453.5 0V384M1461.5 0V384M1469.5 0V384M0 8.5H1477M0 16.5H1477M0 24.5H1477M0 32.5H1477M0 48.5H1477M0 56.5H1477M0 64.5H1477M0 72.5H1477M0 88.5H1477M0 96.5H1477M0 104.5H1477M0 112.5H1477M0 128.5H1477M0 136.5H1477M0 144.5H1477M0 152.5H1477M0 168.5H1477M0 176.5H1477M0 184.5H1477M0 192.5H1477M0 208.5H1477M0 216.5H1477M0 224.5H1477M0 232.5H1477M0 248.5H1477M0 256.5H1477M0 264.5H1477M0 272.5H1477M0 288.5H1477M0 296.5H1477M0 304.5H1477M0 312.5H1477M0 328.5H1477M0 336.5H1477M0 344.5H1477M0 352.5H1477M0 368.5H1477M0 376.5H1477" stroke="#e8f0fa" stroke-width="1"/><path d="M39.5 0V384M79.5 0V384M119.5 0V384M159.5 0V384M199.5 0V384M239.5 0V384M279.5 0V384M319.5 0V384M359.5 0V384M399.5 0V384M439.5 0V384M479.5 0V384M519.5 0V384M559.5 0V384M599.5 0V384M639.5 0V384M678.5 0V384M718.5 0V384M758.5 0V384M798.5 0V384M838.5 0V384M878.5 0V384M918.5 0V384M958.5 0V384M998.5 0V384M1038.5 0V384M1078.5 0V384M1118.5 0V384M1158.5 0V384M1198.5 0V384M1238.5 0V384M1278.5 0V384M1318.5 0V384M1357.5 0V384M1397.5 0V384M1437.5 0V384M0 0.5H1477M0 40.5H1477M0 80.5H1477M0 120.5H1477M0 160.5H1477M0 200.5H1477M0 240.5H1477M0 280.5H1477M0 320.5H1477M0 360.5H1477" stroke="#d9e6f5" stroke-width="1"/></svg>
<div class="a" style="left:1791px;top:63px;width:1px;height:386px;background:#b8b6b2"></div>
<div class="a" style="left:1792px;top:63px;width:101px;height:386px;background:#fff"></div>
<div class="a" style="left:1792px;top:65px;width:101px;height:26px;background:linear-gradient(#fff,#f3f3f3);border-bottom:1px solid #d0d0d0"></div>
<svg class="a" style="left:1795px;top:71px" width="13" height="13" viewBox="0 0 13 13"><circle cx="6.5" cy="6.5" r="6" fill="#eef2f8" stroke="#c8d0dc" stroke-width="0.6"/><circle cx="4.5" cy="3.5" r="1.3" fill="#f0b020"/><circle cx="8.5" cy="3.5" r="1.3" fill="#40b040"/><circle cx="3" cy="7" r="1.3" fill="#f08020"/><circle cx="10" cy="7" r="1.3" fill="#30a030"/><circle cx="5" cy="10" r="1.3" fill="#e04050"/><circle cx="8.5" cy="10" r="1.3" fill="#3070e0"/></svg>
<div class="t ui" style="left:1809px;top:69px;font-size:17px">Palet...</div>
<svg class="a" style="left:1874px;top:73px" width="7" height="10" viewBox="0 0 7 10"><path d="M0.75 0.75 L6 5 L0.75 9.25z" fill="#fff" stroke="#333" stroke-width="1.2"/></svg>
<div class="a" style="left:1802px;top:93px;width:84px;height:23px;background:#c6dcf4"></div>
<svg class="a" style="left:1806px;top:94px" width="9" height="13" viewBox="0 0 9 13"><path d="M0.5 0.5 V10 L3 8 L5 12 L6.5 11.3 L4.7 7.5 L8 7.5z" fill="#f8f4e0" stroke="#555" stroke-width="0.8"/></svg>
<div class="t ui" style="left:1818px;top:96px;font-size:17px">Select</div>
<svg class="a" style="left:1805px;top:120px" width="11" height="12" viewBox="0 0 11 12"><rect x="0.5" y="0.5" width="9" height="9" fill="none" stroke="#b09050" stroke-dasharray="2 1.5"/><path d="M7 10 H11 M9 8 V12" stroke="#3060b0"/></svg>
<div class="t ui" style="left:1819px;top:122px;font-size:17px">Marquee</div>
<div class="a" style="left:1792px;top:143px;width:101px;height:4px;background:#e4e4e4"></div>
<div class="a" style="left:1792px;top:147px;width:101px;height:24px;background:#f2f2f2"></div>
<svg class="a" style="left:1794px;top:152px" width="14" height="11" viewBox="0 0 14 11"><path d="M0.5 1.5 H4.5 L6 3 H11.5 V10.5 H0.5z" fill="#f7d9a0" stroke="#c59a4a"/><path d="M1.5 5 H13.5 L11.5 10.5 H0.5z" fill="#fbe6b8" stroke="#c59a4a" stroke-width="0.8"/></svg>
<div class="t ui" style="left:1808px;top:149px;font-size:17px">Conne...</div>
<svg class="a" style="left:1880px;top:154px" width="10" height="8" viewBox="0 0 10 8"><path d="M4 0.5 L0.5 4 L4 7.5 M6 0.5 L9.5 4 L6 7.5" fill="none" stroke="#aaa" stroke-width="1"/></svg>
<div class="a" style="left:1792px;top:171px;width:101px;height:2px;background:#d8d8d8"></div>
<div class="a" style="left:1792px;top:173px;width:101px;height:24px;background:#f2f2f2"></div>
<svg class="a" style="left:1794px;top:180px" width="14" height="11" viewBox="0 0 14 11"><path d="M0.5 1.5 H4.5 L6 3 H11.5 V10.5 H0.5z" fill="#f7d9a0" stroke="#c59a4a"/><path d="M1.5 5 H13.5 L11.5 10.5 H0.5z" fill="#fbe6b8" stroke="#c59a4a" stroke-width="0.8"/></svg>
<div class="t ui" style="left:1808px;top:177px;font-size:17px">Objects</div>
<svg class="a" style="left:1880px;top:182px" width="10" height="8" viewBox="0 0 10 8"><path d="M4 0.5 L0.5 4 L4 7.5 M6 0.5 L9.5 4 L6 7.5" fill="none" stroke="#aaa" stroke-width="1"/></svg>
<div class="t ui" style="left:1806px;top:202px;font-size:17px">Scheduler</div>
<div class="t ui" style="left:1806px;top:227px;font-size:17px">Process</div>
<div class="t ui" style="left:1806px;top:253px;font-size:17px">Processor</div>
<svg class="a" style="left:0;top:0" width="1894" height="1080" viewBox="0 0 1894 1080"><clipPath id="cpUp"><rect x="313" y="64" width="1477" height="384"/></clipPath><g clip-path="url(#cpUp)"><defs><linearGradient id="gIn" x1="0" y1="0" x2="0" y2="1"><stop offset="0" stop-color="#fbfdf1"/><stop offset="1" stop-color="#dfe3d5"/></linearGradient><linearGradient id="gBox" x1="0" y1="0" x2="0" y2="1"><stop offset="0" stop-color="#d3e4f6"/><stop offset="1" stop-color="#f7f9fc"/></linearGradient><g id="code"><circle cx="0" cy="0" r="9.4" fill="#ee5f4a"/><path d="M-2.3 -3.2 L-5.2 0 L-2.3 3.2 M2.3 -3.2 L5.2 0 L2.3 3.2 M1.1 -4.2 L-1.1 4.2" stroke="#fff" stroke-width="1.25" fill="none"/></g><g id="chip" fill="#5f89a2"><rect x="24.0" y="0" width="6.2" height="8" rx="2.4"/><rect x="24.0" y="93" width="6.2" height="8" rx="2.4"/><rect x="0" y="24.0" width="8" height="6.2" rx="2.4"/><rect x="93" y="24.0" width="8" height="6.2" rx="2.4"/><rect x="36.0" y="0" width="6.2" height="8" rx="2.4"/><rect x="36.0" y="93" width="6.2" height="8" rx="2.4"/><rect x="0" y="36.0" width="8" height="6.2" rx="2.4"/><rect x="93" y="36.0" width="8" height="6.2" rx="2.4"/><rect x="48.0" y="0" width="6.2" height="8" rx="2.4"/><rect x="48.0" y="93" width="6.2" height="8" rx="2.4"/><rect x="0" y="48.0" width="8" height="6.2" rx="2.4"/><rect x="93" y="48.0" width="8" height="6.2" rx="2.4"/><rect x="60.0" y="0" width="6.2" height="8" rx="2.4"/><rect x="60.0" y="93" width="6.2" height="8" rx="2.4"/><rect x="0" y="60.0" width="8" height="6.2" rx="2.4"/><rect x="93" y="60.0" width="8" height="6.2" rx="2.4"/><rect x="72.0" y="0" width="6.2" height="8" rx="2.4"/><rect x="72.0" y="93" width="6.2" height="8" rx="2.4"/><rect x="0" y="72.0" width="8" height="6.2" rx="2.4"/><rect x="93" y="72.0" width="8" height="6.2" rx="2.4"/><path d="M22 10 H79 L91 22 V79 L79 91 H22 L10 79 V22z" fill="none" stroke="#5f89a2" stroke-width="3.4"/><path d="M25 17 H76 L84 25 V76 L76 84 H25 L17 76 V25z"/></g></defs><rect x="321.6" y="73.0" width="317.5" height="318" rx="17" fill="none" stroke="#f89c3c" stroke-width="1.8" stroke-dasharray="4.9 1.5"/><rect x="328.6" y="80.2" width="304" height="303.5" rx="17" fill="#676767"/><rect x="343.20000000000005" y="94.8" width="274.8" height="274.5" rx="3" fill="url(#gIn)" stroke="#6f90b2" stroke-width="1.6"/><use href="#chip" x="429.5" y="181.10000000000002"/><text x="483.6" y="111.7" font-family="Liberation Sans" font-weight="bold" font-size="23.5" text-anchor="middle" fill="#000" letter-spacing="1">C0</text><rect x="349.20000000000005" y="112.7" width="242" height="30.8" rx="2" fill="url(#gBox)" stroke="#6f8fb0" stroke-width="1.2"/><use href="#code" x="361.80000000000007" y="127.9"/><text x="400.20000000000005" y="134.2" font-family="Liberation Sans" font-weight="bold" font-size="18" text-anchor="middle" fill="#000">p1</text><rect x="649.4000000000001" y="73.0" width="317.5" height="318" rx="17" fill="none" stroke="#f89c3c" stroke-width="1.8" stroke-dasharray="4.9 1.5"/><rect x="656.4000000000001" y="80.2" width="304" height="303.5" rx="17" fill="#676767"/><rect x="671.0000000000001" y="94.8" width="274.8" height="274.5" rx="3" fill="url(#gIn)" stroke="#6f90b2" stroke-width="1.6"/><use href="#chip" x="757.3000000000001" y="181.10000000000002"/><text x="811.4000000000001" y="111.7" font-family="Liberation Sans" font-weight="bold" font-size="23.5" text-anchor="middle" fill="#000" letter-spacing="1">C1</text><rect x="676.8000000000001" y="112.6" width="79.5" height="30.8" rx="2" fill="url(#gBox)" stroke="#6f8fb0" stroke-width="1.2"/><use href="#code" x="689.4000000000001" y="127.8"/><text x="727.8000000000001" y="134.1" font-family="Liberation Sans" font-weight="bold" font-size="18" text-anchor="middle" fill="#000">chest3</text><rect x="761.8000000000001" y="112.6" width="79.5" height="30.8" rx="2" fill="url(#gBox)" stroke="#6f8fb0" stroke-width="1.2"/><use href="#code" x="774.4000000000001" y="127.8"/><text x="812.8000000000001" y="134.1" font-family="Liberation Sans" font-weight="bold" font-size="18" text-anchor="middle" fill="#000">fft2</text><rect x="846.8000000000001" y="112.6" width="79.5" height="30.8" rx="2" fill="url(#gBox)" stroke="#6f8fb0" stroke-width="1.2"/><use href="#code" x="859.4000000000001" y="127.8"/><text x="897.8000000000001" y="134.1" font-family="Liberation Sans" font-weight="bold" font-size="18" text-anchor="middle" fill="#000">chest1</text><rect x="676.8000000000001" y="149.0" width="79.5" height="30.8" rx="2" fill="url(#gBox)" stroke="#6f8fb0" stroke-width="1.2"/><use href="#code" x="689.4000000000001" y="164.2"/><text x="727.8000000000001" y="170.5" font-family="Liberation Sans" font-weight="bold" font-size="18" text-anchor="middle" fill="#000">ifft2</text><rect x="761.8000000000001" y="149.0" width="79.5" height="30.8" rx="2" fill="url(#gBox)" stroke="#6f8fb0" stroke-width="1.2"/><use href="#code" x="774.4000000000001" y="164.2"/><text x="812.8000000000001" y="170.5" font-family="Liberation Sans" font-weight="bold" font-size="18" text-anchor="middle" fill="#000">fft1</text><rect x="846.8000000000001" y="149.0" width="79.5" height="30.8" rx="2" fill="url(#gBox)" stroke="#6f8fb0" stroke-width="1.2"/><use href="#code" x="859.4000000000001" y="164.2"/><text x="897.8000000000001" y="170.5" font-family="Liberation Sans" font-weight="bold" font-size="18" text-anchor="middle" fill="#000">chest0</text><rect x="676.8000000000001" y="185.39999999999998" width="79.5" height="30.8" rx="2" fill="url(#gBox)" stroke="#6f8fb0" stroke-width="1.2"/><use href="#code" x="689.4000000000001" y="200.59999999999997"/><text x="727.8000000000001" y="206.89999999999998" font-family="Liberation Sans" font-weight="bold" font-size="18" text-anchor="middle" fill="#000">fft3</text><rect x="761.8000000000001" y="185.39999999999998" width="79.5" height="30.8" rx="2" fill="url(#gBox)" stroke="#6f8fb0" stroke-width="1.2"/><use href="#code" x="774.4000000000001" y="200.59999999999997"/><text x="812.8000000000001" y="206.89999999999998" font-family="Liberation Sans" font-weight="bold" font-size="18" text-anchor="middle" fill="#000">ifft3</text><rect x="846.8000000000001" y="185.39999999999998" width="79.5" height="30.8" rx="2" fill="url(#gBox)" stroke="#6f8fb0" stroke-width="1.2"/><use href="#code" x="859.4000000000001" y="200.59999999999997"/><text x="897.8000000000001" y="206.89999999999998" font-family="Liberation Sans" font-weight="bold" font-size="18" text-anchor="middle" fill="#000">ifft1</text><rect x="676.8000000000001" y="221.8" width="79.5" height="30.8" rx="2" fill="url(#gBox)" stroke="#6f8fb0" stroke-width="1.2"/><use href="#code" x="689.4000000000001" y="237.0"/><text x="727.8000000000001" y="243.3" font-family="Liberation Sans" font-weight="bold" font-size="18" text-anchor="middle" fill="#000">mf3</text><rect x="761.8000000000001" y="221.8" width="79.5" height="30.8" rx="2" fill="url(#gBox)" stroke="#6f8fb0" stroke-width="1.2"/><use href="#code" x="774.4000000000001" y="237.0"/><text x="812.8000000000001" y="243.3" font-family="Liberation Sans" font-weight="bold" font-size="18" text-anchor="middle" fill="#000">chest2</text><rect x="846.8000000000001" y="221.8" width="79.5" height="30.8" rx="2" fill="url(#gBox)" stroke="#6f8fb0" stroke-width="1.2"/><use href="#code" x="859.4000000000001" y="237.0"/><text x="897.8000000000001" y="243.3" font-family="Liberation Sans" font-weight="bold" font-size="18" text-anchor="middle" fill="#000">mf0</text><rect x="676.8000000000001" y="258.2" width="79.5" height="30.8" rx="2" fill="url(#gBox)" stroke="#6f8fb0" stroke-width="1.2"/><use href="#code" x="689.4000000000001" y="273.4"/><text x="727.8000000000001" y="279.7" font-family="Liberation Sans" font-weight="bold" font-size="18" text-anchor="middle" fill="#000">mf2</text><rect x="761.8000000000001" y="258.2" width="79.5" height="30.8" rx="2" fill="url(#gBox)" stroke="#6f8fb0" stroke-width="1.2"/><use href="#code" x="774.4000000000001" y="273.4"/><text x="812.8000000000001" y="279.7" font-family="Liberation Sans" font-weight="bold" font-size="18" text-anchor="middle" fill="#000">mf1</text><rect x="977.2" y="73.0" width="317.5" height="318" rx="17" fill="none" stroke="#f89c3c" stroke-width="1.8" stroke-dasharray="4.9 1.5"/><rect x="984.2" y="80.2" width="304" height="303.5" rx="17" fill="#676767"/><rect x="998.8000000000001" y="94.8" width="274.8" height="274.5" rx="3" fill="url(#gIn)" stroke="#6f90b2" stroke-width="1.6"/><use href="#chip" x="1085.1000000000001" y="181.10000000000002"/><text x="1139.2" y="111.7" font-family="Liberation Sans" font-weight="bold" font-size="23.5" text-anchor="middle" fill="#000" letter-spacing="1">C2</text><rect x="1004.8000000000001" y="112.7" width="242" height="30.8" rx="2" fill="url(#gBox)" stroke="#6f8fb0" stroke-width="1.2"/><use href="#code" x="1017.4000000000001" y="127.9"/><text x="1027.8000000000002" y="134.2" font-family="Liberation Sans" font-weight="bold" font-size="18" fill="#000">com...</text><rect x="1004.8000000000001" y="197.60000000000002" width="242" height="30.8" rx="2" fill="url(#gBox)" stroke="#6f8fb0" stroke-width="1.2"/><use href="#code" x="1017.4000000000001" y="212.8"/><text x="1055.8000000000002" y="219.10000000000002" font-family="Liberation Sans" font-weight="bold" font-size="18" text-anchor="middle" fill="#000">ifft0</text><rect x="1004.8000000000001" y="283.0" width="242" height="30.8" rx="2" fill="url(#gBox)" stroke="#6f8fb0" stroke-width="1.2"/><use href="#code" x="1017.4000000000001" y="298.2"/><text x="1055.8000000000002" y="304.5" font-family="Liberation Sans" font-weight="bold" font-size="18" text-anchor="middle" fill="#000">fft0</text><rect x="1305.0" y="73.0" width="317.5" height="318" rx="17" fill="none" stroke="#f89c3c" stroke-width="1.8" stroke-dasharray="4.9 1.5"/><rect x="1312.0" y="80.2" width="304" height="303.5" rx="17" fill="#676767"/><rect x="1326.6" y="94.8" width="274.8" height="274.5" rx="3" fill="url(#gIn)" stroke="#6f90b2" stroke-width="1.6"/><use href="#chip" x="1412.9" y="181.10000000000002"/><text x="1467.0" y="111.7" font-family="Liberation Sans" font-weight="bold" font-size="23.5" text-anchor="middle" fill="#000" letter-spacing="1">C3</text><rect x="1332.6" y="112.7" width="242" height="30.8" rx="2" fill="url(#gBox)" stroke="#6f8fb0" stroke-width="1.2"/><use href="#code" x="1345.1999999999998" y="127.9"/><text x="1383.6" y="134.2" font-family="Liberation Sans" font-weight="bold" font-size="18" text-anchor="middle" fill="#000">pN</text></g></svg>
<div class="a" style="left:311px;top:451px;width:1583px;height:2px;background:#f4f3f2"></div>
<div class="a" style="left:311px;top:453px;width:1583px;height:603px;background:#fff;border:1px solid #b4b2ae;border-radius:3px 3px 0 0"></div>
<div class="a" style="left:311px;top:453px;width:1583px;height:25px;background:#f0efee;border:1px solid #b4b2ae;border-radius:3px 3px 0 0"></div>
<div class="a" style="left:404px;top:455px;width:1px;height:22px;background:#cfcdc9"></div>
<div class="a" style="left:488px;top:455px;width:1px;height:22px;background:#cfcdc9"></div>
<div class="a" style="left:590px;top:455px;width:1px;height:22px;background:#cfcdc9"></div>
<div class="a" style="left:679px;top:454px;width:151px;height:25px;background:#fff;border-left:1px solid #c9c7c3;border-right:1px solid #c9c7c3"></div>
<svg class="a" style="left:313px;top:459px" width="12" height="13" viewBox="0 0 12 13"><rect x="0.5" y="0.5" width="10" height="12" fill="#fff" stroke="#b0a090"/><circle cx="5" cy="4.5" r="2.3" fill="#e04040"/><path d="M2 11 L5 7 L8 11z" fill="#f0a030"/></svg>
<div class="t ui" style="left:330px;top:457px;font-size:17px">Problems</div>
<svg class="a" style="left:410px;top:460px" width="11" height="11" viewBox="0 0 11 11"><rect x="0.5" y="0.5" width="10" height="8" rx="1" fill="#dfeaf7" stroke="#2a5ab0"/><rect x="2" y="2" width="7" height="5" fill="#3a70c0"/><path d="M3 10.5 H8" stroke="#2a5ab0"/></svg>
<div class="t ui" style="left:423px;top:457px;font-size:17px">Console</div>
<svg class="a" style="left:493px;top:460px" width="11" height="11" viewBox="0 0 11 11"><rect x="0.5" y="0.5" width="10" height="10" fill="#fff" stroke="#555"/><path d="M0.5 3 H10.5 M3.5 3 V10.5" stroke="#555" stroke-width="0.8"/></svg>
<div class="t ui" style="left:507px;top:457px;font-size:17px">Properties</div>
<svg class="a" style="left:594px;top:461px" width="12" height="10" viewBox="0 0 12 10"><rect x="0.5" y="1" width="8" height="4" fill="#7ab07a" stroke="#3a803a" stroke-width="0.6"/><circle cx="8.5" cy="7" r="3" fill="#3aa03a"/></svg>
<div class="t ui" style="left:609px;top:457px;font-size:17px">Progress</div>
<svg class="a" style="left:683px;top:459px" width="12" height="12" viewBox="0 0 12 12"><circle cx="6" cy="2.5" r="2.2" fill="#e04030"/><path d="M6 4.5 V6.5 M2 6.5 H10 M2 6.5 V8 M10 6.5 V8" stroke="#f0a040"/><rect x="0" y="8" width="4" height="4" fill="#f5a040"/><rect x="4" y="8" width="4" height="4" fill="#f5b050"/><rect x="8" y="8" width="4" height="4" fill="#f5a040"/></svg>
<div class="t ui" style="left:697px;top:457px;font-size:17px">lte_benchmark</div>
<svg class="a" style="left:816px;top:461px" width="10" height="10" viewBox="0 0 10 10"><path d="M2 2 L8 8 M8 2 L2 8" stroke="#4a4a4a" stroke-width="2.4" stroke-linecap="square"/><path d="M2 2 L8 8 M8 2 L2 8" stroke="#fff" stroke-width="0.9" /></svg>
<svg class="a" style="left:1853px;top:460px" width="11" height="4" viewBox="0 0 11 4"><rect x="0.5" y="0.5" width="10" height="3" fill="#fff" stroke="#222"/></svg>
<svg class="a" style="left:1875px;top:460px" width="12" height="12" viewBox="0 0 12 12"><rect x="0.75" y="0.75" width="10.5" height="10.5" fill="#fff" stroke="#222" stroke-width="1.5"/><path d="M1 2.5 H11" stroke="#222" stroke-width="1.5"/></svg>
<svg class="a" style="left:313px;top:479px;background:#fff" width="1465" height="563" shape-rendering="crispEdges"><path d="M6.5 0V563M10.5 0V563M14.5 0V563M18.5 0V563M26.5 0V563M29.5 0V563M33.5 0V563M37.5 0V563M45.5 0V563M49.5 0V563M52.5 0V563M56.5 0V563M64.5 0V563M68.5 0V563M72.5 0V563M76.5 0V563M83.5 0V563M87.5 0V563M91.5 0V563M95.5 0V563M102.5 0V563M106.5 0V563M110.5 0V563M114.5 0V563M122.5 0V563M126.5 0V563M129.5 0V563M133.5 0V563M141.5 0V563M145.5 0V563M149.5 0V563M152.5 0V563M160.5 0V563M164.5 0V563M168.5 0V563M172.5 0V563M179.5 0V563M183.5 0V563M187.5 0V563M191.5 0V563M199.5 0V563M202.5 0V563M206.5 0V563M210.5 0V563M218.5 0V563M222.5 0V563M226.5 0V563M229.5 0V563M237.5 0V563M241.5 0V563M245.5 0V563M249.5 0V563M256.5 0V563M260.5 0V563M264.5 0V563M268.5 0V563M276.5 0V563M279.5 0V563M283.5 0V563M287.5 0V563M295.5 0V563M299.5 0V563M303.5 0V563M306.5 0V563M314.5 0V563M318.5 0V563M322.5 0V563M326.5 0V563M333.5 0V563M337.5 0V563M341.5 0V563M345.5 0V563M353.5 0V563M356.5 0V563M360.5 0V563M364.5 0V563M372.5 0V563M376.5 0V563M379.5 0V563M383.5 0V563M391.5 0V563M395.5 0V563M399.5 0V563M403.5 0V563M410.5 0V563M414.5 0V563M418.5 0V563M422.5 0V563M429.5 0V563M433.5 0V563M437.5 0V563M441.5 0V563M449.5 0V563M453.5 0V563M456.5 0V563M460.5 0V563M468.5 0V563M472.5 0V563M476.5 0V563M479.5 0V563M487.5 0V563M491.5 0V563M495.5 0V563M499.5 0V563M506.5 0V563M510.5 0V563M514.5 0V563M518.5 0V563M526.5 0V563M529.5 0V563M533.5 0V563M537.5 0V563M545.5 0V563M549.5 0V563M553.5 0V563M556.5 0V563M564.5 0V563M568.5 0V563M572.5 0V563M576.5 0V563M583.5 0V563M587.5 0V563M591.5 0V563M595.5 0V563M603.5 0V563M606.5 0V563M610.5 0V563M614.5 0V563M622.5 0V563M626.5 0V563M629.5 0V563M633.5 0V563M641.5 0V563M645.5 0V563M649.5 0V563M653.5 0V563M660.5 0V563M664.5 0V563M668.5 0V563M672.5 0V563M679.5 0V563M683.5 0V563M687.5 0V563M691.5 0V563M699.5 0V563M703.5 0V563M706.5 0V563M710.5 0V563M718.5 0V563M722.5 0V563M726.5 0V563M729.5 0V563M737.5 0V563M741.5 0V563M745.5 0V563M749.5 0V563M756.5 0V563M760.5 0V563M764.5 0V563M768.5 0V563M776.5 0V563M779.5 0V563M783.5 0V563M787.5 0V563M795.5 0V563M799.5 0V563M803.5 0V563M806.5 0V563M814.5 0V563M818.5 0V563M822.5 0V563M826.5 0V563M833.5 0V563M837.5 0V563M841.5 0V563M845.5 0V563M853.5 0V563M856.5 0V563M860.5 0V563M864.5 0V563M872.5 0V563M876.5 0V563M879.5 0V563M883.5 0V563M891.5 0V563M895.5 0V563M899.5 0V563M903.5 0V563M910.5 0V563M914.5 0V563M918.5 0V563M922.5 0V563M929.5 0V563M933.5 0V563M937.5 0V563M941.5 0V563M949.5 0V563M953.5 0V563M956.5 0V563M960.5 0V563M968.5 0V563M972.5 0V563M976.5 0V563M980.5 0V563M987.5 0V563M991.5 0V563M995.5 0V563M999.5 0V563M1006.5 0V563M1010.5 0V563M1014.5 0V563M1018.5 0V563M1026.5 0V563M1030.5 0V563M1033.5 0V563M1037.5 0V563M1045.5 0V563M1049.5 0V563M1053.5 0V563M1056.5 0V563M1064.5 0V563M1068.5 0V563M1072.5 0V563M1076.5 0V563M1083.5 0V563M1087.5 0V563M1091.5 0V563M1095.5 0V563M1103.5 0V563M1106.5 0V563M1110.5 0V563M1114.5 0V563M1122.5 0V563M1126.5 0V563M1130.5 0V563M1133.5 0V563M1141.5 0V563M1145.5 0V563M1149.5 0V563M1153.5 0V563M1160.5 0V563M1164.5 0V563M1168.5 0V563M1172.5 0V563M1180.5 0V563M1183.5 0V563M1187.5 0V563M1191.5 0V563M1199.5 0V563M1203.5 0V563M1206.5 0V563M1210.5 0V563M1218.5 0V563M1222.5 0V563M1226.5 0V563M1230.5 0V563M1237.5 0V563M1241.5 0V563M1245.5 0V563M1249.5 0V563M1256.5 0V563M1260.5 0V563M1264.5 0V563M1268.5 0V563M1276.5 0V563M1280.5 0V563M1283.5 0V563M1287.5 0V563M1295.5 0V563M1299.5 0V563M1303.5 0V563M1306.5 0V563M1314.5 0V563M1318.5 0V563M1322.5 0V563M1326.5 0V563M1333.5 0V563M1337.5 0V563M1341.5 0V563M1345.5 0V563M1353.5 0V563M1356.5 0V563M1360.5 0V563M1364.5 0V563M1372.5 0V563M1376.5 0V563M1380.5 0V563M1383.5 0V563M1391.5 0V563M1395.5 0V563M1399.5 0V563M1403.5 0V563M1410.5 0V563M1414.5 0V563M1418.5 0V563M1422.5 0V563M1430.5 0V563M1433.5 0V563M1437.5 0V563M1441.5 0V563M1449.5 0V563M1453.5 0V563M1456.5 0V563M1460.5 0V563M0 4.5H1465M0 7.5H1465M0 11.5H1465M0 15.5H1465M0 23.5H1465M0 27.5H1465M0 31.5H1465M0 34.5H1465M0 42.5H1465M0 46.5H1465M0 50.5H1465M0 54.5H1465M0 61.5H1465M0 65.5H1465M0 69.5H1465M0 73.5H1465M0 81.5H1465M0 84.5H1465M0 88.5H1465M0 92.5H1465M0 100.5H1465M0 104.5H1465M0 107.5H1465M0 111.5H1465M0 119.5H1465M0 123.5H1465M0 127.5H1465M0 131.5H1465M0 138.5H1465M0 142.5H1465M0 146.5H1465M0 150.5H1465M0 157.5H1465M0 161.5H1465M0 165.5H1465M0 169.5H1465M0 177.5H1465M0 181.5H1465M0 184.5H1465M0 188.5H1465M0 196.5H1465M0 200.5H1465M0 204.5H1465M0 207.5H1465M0 215.5H1465M0 219.5H1465M0 223.5H1465M0 227.5H1465M0 234.5H1465M0 238.5H1465M0 242.5H1465M0 246.5H1465M0 254.5H1465M0 257.5H1465M0 261.5H1465M0 265.5H1465M0 273.5H1465M0 277.5H1465M0 281.5H1465M0 284.5H1465M0 292.5H1465M0 296.5H1465M0 300.5H1465M0 304.5H1465M0 311.5H1465M0 315.5H1465M0 319.5H1465M0 323.5H1465M0 331.5H1465M0 334.5H1465M0 338.5H1465M0 342.5H1465M0 350.5H1465M0 354.5H1465M0 358.5H1465M0 361.5H1465M0 369.5H1465M0 373.5H1465M0 377.5H1465M0 381.5H1465M0 388.5H1465M0 392.5H1465M0 396.5H1465M0 400.5H1465M0 408.5H1465M0 411.5H1465M0 415.5H1465M0 419.5H1465M0 427.5H1465M0 431.5H1465M0 434.5H1465M0 438.5H1465M0 446.5H1465M0 450.5H1465M0 454.5H1465M0 458.5H1465M0 465.5H1465M0 469.5H1465M0 473.5H1465M0 477.5H1465M0 484.5H1465M0 488.5H1465M0 492.5H1465M0 496.5H1465M0 504.5H1465M0 508.5H1465M0 511.5H1465M0 515.5H1465M0 523.5H1465M0 527.5H1465M0 531.5H1465M0 534.5H1465M0 542.5H1465M0 546.5H1465M0 550.5H1465M0 554.5H1465M0 561.5H1465" stroke="#e8f0fa" stroke-width="1"/><path d="M2.5 0V563M22.5 0V563M41.5 0V563M60.5 0V563M79.5 0V563M99.5 0V563M118.5 0V563M137.5 0V563M156.5 0V563M176.5 0V563M195.5 0V563M214.5 0V563M233.5 0V563M252.5 0V563M272.5 0V563M291.5 0V563M310.5 0V563M329.5 0V563M349.5 0V563M368.5 0V563M387.5 0V563M406.5 0V563M426.5 0V563M445.5 0V563M464.5 0V563M483.5 0V563M503.5 0V563M522.5 0V563M541.5 0V563M560.5 0V563M579.5 0V563M599.5 0V563M618.5 0V563M637.5 0V563M656.5 0V563M676.5 0V563M695.5 0V563M714.5 0V563M733.5 0V563M753.5 0V563M772.5 0V563M791.5 0V563M810.5 0V563M829.5 0V563M849.5 0V563M868.5 0V563M887.5 0V563M906.5 0V563M926.5 0V563M945.5 0V563M964.5 0V563M983.5 0V563M1003.5 0V563M1022.5 0V563M1041.5 0V563M1060.5 0V563M1080.5 0V563M1099.5 0V563M1118.5 0V563M1137.5 0V563M1156.5 0V563M1176.5 0V563M1195.5 0V563M1214.5 0V563M1233.5 0V563M1253.5 0V563M1272.5 0V563M1291.5 0V563M1310.5 0V563M1330.5 0V563M1349.5 0V563M1368.5 0V563M1387.5 0V563M1406.5 0V563M1426.5 0V563M1445.5 0V563M1464.5 0V563M0 0.5H1465M0 19.5H1465M0 38.5H1465M0 57.5H1465M0 77.5H1465M0 96.5H1465M0 115.5H1465M0 134.5H1465M0 154.5H1465M0 173.5H1465M0 192.5H1465M0 211.5H1465M0 231.5H1465M0 250.5H1465M0 269.5H1465M0 288.5H1465M0 307.5H1465M0 327.5H1465M0 346.5H1465M0 365.5H1465M0 384.5H1465M0 404.5H1465M0 423.5H1465M0 442.5H1465M0 461.5H1465M0 481.5H1465M0 500.5H1465M0 519.5H1465M0 538.5H1465M0 558.5H1465" stroke="#d8e5f4" stroke-width="1"/></svg>
<div class="a" style="left:1778px;top:479px;width:13px;height:576px;background:#f2f1f0"></div>
<div class="a" style="left:1779px;top:479px;width:11px;height:563px;background:#fdfdfd;border:1px solid #d6d4d0;border-radius:6px"></div>
<div class="a" style="left:1780px;top:490px;width:9px;height:545px;background:#d9d8d6;border-radius:5px"></div>
<div class="a" style="left:1780px;top:498px;width:9px;height:250px;background:#f6f6f5;border:1px solid #dcdad6;border-radius:5px"></div>
<div class="a" style="left:1783px;top:620px;width:3px;height:5px;border-top:1px solid #bbb;border-bottom:1px solid #bbb"></div>
<div class="dd" style="left:1781px;top:1034px;border-left-width:4px;border-right-width:4px;border-top:4px solid #6a6a6a"></div>
<div class="a" style="left:1781px;top:485px;width:0;height:0;border-left:4px solid transparent;border-right:4px solid transparent;border-bottom:4px solid #6a6a6a"></div>
<div class="a" style="left:313px;top:1042px;width:1465px;height:14px;background:#f2f1f0"></div>
<div class="a" style="left:313px;top:1044px;width:1463px;height:11px;background:#fdfdfd;border:1px solid #d6d4d0;border-radius:6px"></div>
<div class="a" style="left:323px;top:1045px;width:20px;height:9px;background:#d9d8d6;border-radius:5px"></div>
<div class="a" style="left:341px;top:1045px;width:1420px;height:9px;background:#f4f4f3;border:1px solid #dcdad6;border-radius:5px"></div>
<div class="a" style="left:1756px;top:1045px;width:12px;height:9px;background:#dcdbd9;border-radius:5px"></div>
<div class="a" style="left:317px;top:1046px;width:0;height:0;border-top:3px solid transparent;border-bottom:3px solid transparent;border-right:4px solid #5a5a5a"></div>
<div class="a" style="left:1770px;top:1046px;width:0;height:0;border-top:3px solid transparent;border-bottom:3px solid transparent;border-left:4px solid #5a5a5a"></div>
<div class="a" style="left:1791px;top:479px;width:1px;height:576px;background:#b8b6b2"></div>
<div class="a" style="left:1792px;top:480px;width:101px;height:26px;background:linear-gradient(#fff,#f3f3f3);border-bottom:1px solid #d0d0d0"></div>
<svg class="a" style="left:1795px;top:486px" width="13" height="13" viewBox="0 0 13 13"><circle cx="6.5" cy="6.5" r="6" fill="#eef2f8" stroke="#c8d0dc" stroke-width="0.6"/><circle cx="4.5" cy="3.5" r="1.3" fill="#f0b020"/><circle cx="8.5" cy="3.5" r="1.3" fill="#40b040"/><circle cx="3" cy="7" r="1.3" fill="#f08020"/><circle cx="10" cy="7" r="1.3" fill="#30a030"/><circle cx="5" cy="10" r="1.3" fill="#e04050"/><circle cx="8.5" cy="10" r="1.3" fill="#3070e0"/></svg>
<div class="t ui" style="left:1809px;top:484px;font-size:17px">Palet...</div>
<svg class="a" style="left:1874px;top:488px" width="7" height="10" viewBox="0 0 7 10"><path d="M0.75 0.75 L6 5 L0.75 9.25z" fill="#fff" stroke="#333" stroke-width="1.2"/></svg>
<div class="a" style="left:1802px;top:507px;width:84px;height:23px;background:#c6dcf4"></div>
<svg class="a" style="left:1806px;top:509px" width="9" height="13" viewBox="0 0 9 13"><path d="M0.5 0.5 V10 L3 8 L5 12 L6.5 11.3 L4.7 7.5 L8 7.5z" fill="#f8f4e0" stroke="#555" stroke-width="0.8"/></svg>
<div class="t ui" style="left:1818px;top:511px;font-size:17px">Select</div>
<svg class="a" style="left:1805px;top:534px" width="11" height="12" viewBox="0 0 11 12"><rect x="0.5" y="0.5" width="9" height="9" fill="none" stroke="#b09050" stroke-dasharray="2 1.5"/><path d="M7 10 H11 M9 8 V12" stroke="#3060b0"/></svg>
<div class="t ui" style="left:1819px;top:536px;font-size:17px">Marquee</div>
<svg class="a" style="left:0;top:0" width="1894" height="1080" viewBox="0 0 1894 1080"><clipPath id="cpLo"><rect x="313" y="479" width="1465" height="563"/></clipPath><g clip-path="url(#cpLo)"><defs><linearGradient id="gBlk" x1="0" y1="0" x2="0" y2="1"><stop offset="0" stop-color="#4eb0b2"/><stop offset="1" stop-color="#a4e5e5"/></linearGradient><linearGradient id="gPin" x1="0" y1="0" x2="0" y2="1"><stop offset="0" stop-color="#f4f8fd"/><stop offset="1" stop-color="#cadcef"/></linearGradient><linearGradient id="gPout" x1="0" y1="0" x2="0" y2="1"><stop offset="0" stop-color="#ffffff"/><stop offset="1" stop-color="#f3f3ea"/></linearGradient><radialGradient id="gGear" cx="0.4" cy="0.35" r="0.7"><stop offset="0" stop-color="#f4f4f4"/><stop offset="0.6" stop-color="#b8b8b8"/><stop offset="1" stop-color="#7a7a7a"/></radialGradient></defs><defs><radialGradient id="gGear2" cx="0.45" cy="0.4" r="0.65"><stop offset="0" stop-color="#f2f2f2"/><stop offset="0.7" stop-color="#c4c4c4"/><stop offset="1" stop-color="#8c8c8c"/></radialGradient><g id="gear"><path d="M0.00 -8.40 L0.83 -10.57 L3.43 -10.03 L3.34 -7.71 L5.94 -5.94 L8.06 -6.88 L9.52 -4.66 L7.81 -3.09 L8.40 0.00 L10.57 0.83 L10.03 3.43 L7.71 3.34 L5.94 5.94 L6.88 8.06 L4.66 9.52 L3.09 7.81 L0.00 8.40 L-0.83 10.57 L-3.43 10.03 L-3.34 7.71 L-5.94 5.94 L-8.06 6.88 L-9.52 4.66 L-7.81 3.09 L-8.40 0.00 L-10.57 -0.83 L-10.03 -3.43 L-7.71 -3.34 L-5.94 -5.94 L-6.88 -8.06 L-4.66 -9.52 L-3.09 -7.81z" fill="url(#gGear2)" stroke="#909090" stroke-width="0.6"/><circle r="5.6" fill="none" stroke="#b0b0b0" stroke-width="0.8"/><circle r="3.5" fill="#6cc3c5" stroke="#8a8a8a" stroke-width="0.6"/></g></defs><path d="M525.3 1043.0 L525.3 889.5 Q525.3 886.0 528.8 886.0 L587.2 886.0" fill="none" stroke="#3b72a6" stroke-width="1.85"/><path d="M525.3 1020.0 L525.3 1006.8 Q525.3 1003.3 528.8 1003.3 L587.2 1003.3 Q590.7 1003.3 590.7 999.8 L590.7 990.0" fill="none" stroke="#3b72a6" stroke-width="1.85"/><path d="M610.3 571.2 L590.7 571.2 Q587.2 571.2 587.2 574.7 L587.2 1043.0" fill="none" stroke="#3b72a6" stroke-width="1.85"/><path d="M777.7 670.0 L777.7 686.5 Q777.7 690.0 774.2 690.0 L594.2 690.0 Q590.7 690.0 590.7 693.5 L590.7 1043.0" fill="none" stroke="#3b72a6" stroke-width="1.85"/><path d="M590.7 740.0 L590.7 717.5 Q590.7 714.0 594.2 714.0 L984.5 714.0 Q988.0 714.0 988.0 710.5 L988.0 479.0" fill="none" stroke="#3b72a6" stroke-width="1.85"/><path d="M590.7 830.0 L590.7 809.9 Q590.7 806.4 594.2 806.4 L777.7 806.4 Q781.2 806.4 781.2 802.9 L781.2 740.7 Q781.2 737.2 784.7 737.2 L1194.3 737.2 Q1197.8 737.2 1197.8 740.7 L1197.8 800.0" fill="none" stroke="#3b72a6" stroke-width="1.85"/><path d="M610.3 927.4 L594.2 927.4 Q590.7 927.4 590.7 930.9 L590.7 940.0" fill="none" stroke="#3b72a6" stroke-width="1.85"/><path d="M739.3 571.2 L778.2 571.2 Q781.7 571.2 781.7 567.7 L781.7 479.0" fill="none" stroke="#3b72a6" stroke-width="1.85"/><path d="M739.3 571.2 L774.2 571.2 Q777.7 571.2 777.7 574.7 L777.7 1043.0" fill="none" stroke="#3b72a6" stroke-width="1.85"/><path d="M777.7 594.4 L820.2 594.4" fill="none" stroke="#3b72a6" stroke-width="1.85"/><path d="M940.0 594.4 L984.5 594.4 Q988.0 594.4 988.0 597.9 L988.0 640.0" fill="none" stroke="#3b72a6" stroke-width="1.85"/><path d="M988.0 617.8 L1030.3 617.8" fill="none" stroke="#3b72a6" stroke-width="1.85"/><path d="M991.3 479.0 L991.3 494.8 Q991.3 498.3 994.8 498.3 L1614.3 498.3 Q1617.8 498.3 1617.8 501.8 L1617.8 1043.0" fill="none" stroke="#3b72a6" stroke-width="1.85"/><path d="M739.4 927.4 L777.7 927.4 Q781.2 927.4 781.2 923.9 L781.2 834.0 Q781.2 830.5 784.7 830.5 L984.1 830.5 Q987.6 830.5 987.6 834.0 L987.6 1043.0" fill="none" stroke="#3b72a6" stroke-width="1.85"/><path d="M781.2 790.0 L781.2 764.5 Q781.2 761.0 784.7 761.0 L1194.3 761.0 Q1197.8 761.0 1197.8 764.5 L1197.8 800.0" fill="none" stroke="#3b72a6" stroke-width="1.85"/><path d="M781.2 800.0 L781.2 787.5 Q781.2 784.0 784.7 784.0 L987.6 784.0 Q991.1 784.0 991.1 787.5 L991.1 1043.0" fill="none" stroke="#3b72a6" stroke-width="1.85"/><path d="M991.1 810.0 L991.1 787.5 Q991.1 784.0 994.6 784.0 L1240.3 784.0" fill="none" stroke="#3b72a6" stroke-width="1.85"/><path d="M777.7 807.3 L987.6 807.3 Q991.1 807.3 991.1 810.8 L991.1 830.0" fill="none" stroke="#3b72a6" stroke-width="1.85"/><path d="M991.1 820.0 L991.1 810.8 Q991.1 807.3 994.6 807.3 L1194.3 807.3 Q1197.8 807.3 1197.8 810.8 L1197.8 840.0" fill="none" stroke="#3b72a6" stroke-width="1.85"/><path d="M991.1 850.0 L991.1 834.0 Q991.1 830.5 994.6 830.5 L1194.3 830.5 Q1197.8 830.5 1197.8 834.0 L1197.8 850.0" fill="none" stroke="#3b72a6" stroke-width="1.85"/><path d="M1159.0 617.8 L1194.3 617.8 Q1197.8 617.8 1197.8 621.3 L1197.8 1043.0" fill="none" stroke="#3b72a6" stroke-width="1.85"/><path d="M1159.0 617.8 L1197.1 617.8 Q1200.6 617.8 1200.6 621.3 L1200.6 660.5 Q1200.6 664.0 1204.1 664.0 L1404.2 664.0 Q1407.7 664.0 1407.7 667.5 L1407.7 1043.0" fill="none" stroke="#3b72a6" stroke-width="1.85"/><path d="M1360.0 784.2 L1404.2 784.2 Q1407.7 784.2 1407.7 787.7 L1407.7 820.0" fill="none" stroke="#3b72a6" stroke-width="1.85"/><path d="M777.7 951.1 L820.2 951.1" fill="none" stroke="#3b72a6" stroke-width="1.85"/><path d="M940.0 951.1 L1030.2 951.1" fill="none" stroke="#3b72a6" stroke-width="1.85"/><path d="M1159.0 951.1 L1197.8 951.1" fill="none" stroke="#3b72a6" stroke-width="1.85"/><path d="M1197.8 951.1 L1199.8 951.1 Q1201.9 951.1 1201.9 949.0 L1201.9 928.6 Q1201.9 925.1 1205.4 925.1 L1404.2 925.1 Q1407.7 925.1 1407.7 928.6 L1407.7 950.0" fill="none" stroke="#3b72a6" stroke-width="1.85"/><rect x="629.3" y="514.4" width="95" height="114" fill="url(#gBlk)" stroke="#86a9b8" stroke-width="1"/><rect x="629.3" y="514.4" width="95" height="1.6" fill="#8fa8bf"/><text x="676.3" y="527.6" font-family="Liberation Sans" font-weight="bold" font-size="12.5" text-anchor="middle" fill="#000">mf0</text><use href="#gear" x="663.4" y="565.1"/><use href="#gear" x="684.6999999999999" y="560.3"/><use href="#gear" x="677.3" y="579.3"/><text x="676.3" y="597.1999999999999" font-family="Liberation Sans" font-weight="bold" font-size="10" text-anchor="middle" fill="#000">KPN</text><text x="676.3" y="606.0" font-family="Liberation Sans" font-weight="bold" font-size="8.8" text-anchor="middle" fill="#000">mfTempl</text><path d="M609.8 571.2 Q616.8 571.2 618.3 568.1 L621.6999999999999 565.6" fill="none" stroke="#3b72a6" stroke-width="1.8"/><path d="M609.8 571.2 Q616.8 571.2 618.3 571.5 L621.6999999999999 571.7" fill="none" stroke="#3b72a6" stroke-width="1.8"/><path d="M609.8 571.2 Q616.8 571.2 618.3 575.3 L621.6999999999999 578.7" fill="none" stroke="#3b72a6" stroke-width="1.8"/><rect x="622.3" y="555.9" width="6" height="34" fill="#dfe6ee"/><path d="M621.6999999999999 555.6 H631.6999999999999 L634.6999999999999 560.6 L631.6999999999999 565.6 H621.6999999999999z" fill="url(#gPin)" stroke="#b8c8da" stroke-width="0.8"/><path d="M621.6999999999999 567.9 H631.6999999999999 L634.6999999999999 572.9 L631.6999999999999 577.9 H621.6999999999999z" fill="url(#gPin)" stroke="#b8c8da" stroke-width="0.8"/><path d="M621.6999999999999 580.1 H631.6999999999999 L634.6999999999999 585.1 L631.6999999999999 590.1 H621.6999999999999z" fill="url(#gPin)" stroke="#b8c8da" stroke-width="0.8"/><path d="M716.3 561.0 H726.3 L729.3 565.7 L726.3 570.5 H716.3z" fill="url(#gPout)" stroke="#d0d0c0" stroke-width="0.8"/><path d="M716.3 573.6999999999999 H726.3 L729.3 578.4 L726.3 583.1999999999999 H716.3z" fill="url(#gPout)" stroke="#d0d0c0" stroke-width="0.8"/><path d="M729.3 565.7 Q733.3 571.2 739.3 571.2" fill="none" stroke="#3b72a6" stroke-width="1.8"/><path d="M729.3 578.4 Q733.3 571.2 739.3 571.2" fill="none" stroke="#3b72a6" stroke-width="1.8"/><rect x="839.2" y="537.6" width="95" height="114" fill="url(#gBlk)" stroke="#86a9b8" stroke-width="1"/><rect x="839.2" y="537.6" width="95" height="1.6" fill="#8fa8bf"/><text x="886.2" y="550.8000000000001" font-family="Liberation Sans" font-weight="bold" font-size="12.5" text-anchor="middle" fill="#000">ifft0</text><use href="#gear" x="873.3000000000001" y="588.3000000000001"/><use href="#gear" x="894.6" y="583.5"/><use href="#gear" x="887.2" y="602.5"/><text x="886.2" y="620.4" font-family="Liberation Sans" font-weight="bold" font-size="10" text-anchor="middle" fill="#000">KPN</text><text x="886.2" y="629.2" font-family="Liberation Sans" font-weight="bold" font-size="8.8" text-anchor="middle" fill="#000">ifftTempl</text><path d="M819.7 594.4 Q826.7 594.4 828.2 591.3 L831.6 588.8" fill="none" stroke="#3b72a6" stroke-width="1.8"/><path d="M819.7 594.4 Q826.7 594.4 828.2 594.7 L831.6 594.9" fill="none" stroke="#3b72a6" stroke-width="1.8"/><path d="M819.7 594.4 Q826.7 594.4 828.2 598.5 L831.6 601.9" fill="none" stroke="#3b72a6" stroke-width="1.8"/><rect x="832.2" y="579.1" width="6" height="34" fill="#dfe6ee"/><path d="M831.6 578.8000000000001 H841.6 L844.6 583.8000000000001 L841.6 588.8000000000001 H831.6z" fill="url(#gPin)" stroke="#b8c8da" stroke-width="0.8"/><path d="M831.6 591.1 H841.6 L844.6 596.1 L841.6 601.1 H831.6z" fill="url(#gPin)" stroke="#b8c8da" stroke-width="0.8"/><path d="M831.6 603.3000000000001 H841.6 L844.6 608.3000000000001 L841.6 613.3000000000001 H831.6z" fill="url(#gPin)" stroke="#b8c8da" stroke-width="0.8"/><path d="M926.4000000000001 589.6 H936.4000000000001 L939.4000000000001 594.6 L936.4000000000001 599.6 H926.4000000000001z" fill="url(#gPout)" stroke="#d0d0c0" stroke-width="0.8"/><rect x="1049.3" y="561" width="95" height="114" fill="url(#gBlk)" stroke="#86a9b8" stroke-width="1"/><rect x="1049.3" y="561" width="95" height="1.6" fill="#8fa8bf"/><text x="1096.3" y="574.2" font-family="Liberation Sans" font-weight="bold" font-size="12.5" text-anchor="middle" fill="#000">chest0</text><use href="#gear" x="1083.3999999999999" y="611.7"/><use href="#gear" x="1104.7" y="606.9"/><use href="#gear" x="1097.3" y="625.9"/><text x="1096.3" y="643.8" font-family="Liberation Sans" font-weight="bold" font-size="10" text-anchor="middle" fill="#000">KPN</text><text x="1096.3" y="652.6" font-family="Liberation Sans" font-weight="bold" font-size="8.8" text-anchor="middle" fill="#000">chestTempl</text><path d="M1029.8 617.8 Q1036.8 617.8 1038.3 614.7 L1041.7 612.2" fill="none" stroke="#3b72a6" stroke-width="1.8"/><path d="M1029.8 617.8 Q1036.8 617.8 1038.3 618.1 L1041.7 618.3" fill="none" stroke="#3b72a6" stroke-width="1.8"/><path d="M1029.8 617.8 Q1036.8 617.8 1038.3 621.9 L1041.7 625.3" fill="none" stroke="#3b72a6" stroke-width="1.8"/><rect x="1042.3" y="602.5" width="6" height="34" fill="#dfe6ee"/><path d="M1041.7 602.2 H1051.7 L1054.7 607.2 L1051.7 612.2 H1041.7z" fill="url(#gPin)" stroke="#b8c8da" stroke-width="0.8"/><path d="M1041.7 614.5 H1051.7 L1054.7 619.5 L1051.7 624.5 H1041.7z" fill="url(#gPin)" stroke="#b8c8da" stroke-width="0.8"/><path d="M1041.7 626.7 H1051.7 L1054.7 631.7 L1051.7 636.7 H1041.7z" fill="url(#gPin)" stroke="#b8c8da" stroke-width="0.8"/><path d="M1136.3 607.6 H1146.3 L1149.3 612.3000000000001 L1146.3 617.1 H1136.3z" fill="url(#gPout)" stroke="#d0d0c0" stroke-width="0.8"/><path d="M1136.3 620.3 H1146.3 L1149.3 625.0 L1146.3 629.8 H1136.3z" fill="url(#gPout)" stroke="#d0d0c0" stroke-width="0.8"/><path d="M1149.3 612.3 Q1153.3 617.8 1159.3 617.8" fill="none" stroke="#3b72a6" stroke-width="1.8"/><path d="M1149.3 625.0 Q1153.3 617.8 1159.3 617.8" fill="none" stroke="#3b72a6" stroke-width="1.8"/><rect x="1259.3" y="727.4" width="95" height="114" fill="url(#gBlk)" stroke="#86a9b8" stroke-width="1"/><rect x="1259.3" y="727.4" width="95" height="1.6" fill="#8fa8bf"/><text x="1306.3" y="740.6" font-family="Liberation Sans" font-weight="bold" font-size="12.5" text-anchor="middle" fill="#000">fft0</text><use href="#gear" x="1293.3999999999999" y="778.1"/><use href="#gear" x="1314.7" y="773.3"/><use href="#gear" x="1307.3" y="792.3"/><text x="1306.3" y="810.1999999999999" font-family="Liberation Sans" font-weight="bold" font-size="10" text-anchor="middle" fill="#000">KPN</text><text x="1306.3" y="819.0" font-family="Liberation Sans" font-weight="bold" font-size="8.8" text-anchor="middle" fill="#000">fftTempl</text><path d="M1239.8 784.2 Q1246.8 784.2 1248.3 781.1 L1251.7 778.6" fill="none" stroke="#3b72a6" stroke-width="1.8"/><path d="M1239.8 784.2 Q1246.8 784.2 1248.3 784.5 L1251.7 784.7" fill="none" stroke="#3b72a6" stroke-width="1.8"/><path d="M1239.8 784.2 Q1246.8 784.2 1248.3 788.3 L1251.7 791.7" fill="none" stroke="#3b72a6" stroke-width="1.8"/><rect x="1252.3" y="768.9" width="6" height="34" fill="#dfe6ee"/><path d="M1251.7 768.6 H1261.7 L1264.7 773.6 L1261.7 778.6 H1251.7z" fill="url(#gPin)" stroke="#b8c8da" stroke-width="0.8"/><path d="M1251.7 780.9 H1261.7 L1264.7 785.9 L1261.7 790.9 H1251.7z" fill="url(#gPin)" stroke="#b8c8da" stroke-width="0.8"/><path d="M1251.7 793.1 H1261.7 L1264.7 798.1 L1261.7 803.1 H1251.7z" fill="url(#gPin)" stroke="#b8c8da" stroke-width="0.8"/><path d="M1346.5 779.4 H1356.5 L1359.5 784.4 L1356.5 789.4 H1346.5z" fill="url(#gPout)" stroke="#d0d0c0" stroke-width="0.8"/><rect x="629.4" y="870.6" width="95" height="114" fill="url(#gBlk)" stroke="#86a9b8" stroke-width="1"/><rect x="629.4" y="870.6" width="95" height="1.6" fill="#8fa8bf"/><text x="676.4" y="883.8000000000001" font-family="Liberation Sans" font-weight="bold" font-size="12.5" text-anchor="middle" fill="#000">mf1</text><use href="#gear" x="663.5" y="921.3000000000001"/><use href="#gear" x="684.8" y="916.5"/><use href="#gear" x="677.4" y="935.5"/><text x="676.4" y="953.4" font-family="Liberation Sans" font-weight="bold" font-size="10" text-anchor="middle" fill="#000">KPN</text><text x="676.4" y="962.2" font-family="Liberation Sans" font-weight="bold" font-size="8.8" text-anchor="middle" fill="#000">mfTempl</text><path d="M609.9 927.4 Q616.9 927.4 618.4 924.3 L621.8 921.8" fill="none" stroke="#3b72a6" stroke-width="1.8"/><path d="M609.9 927.4 Q616.9 927.4 618.4 927.7 L621.8 927.9" fill="none" stroke="#3b72a6" stroke-width="1.8"/><path d="M609.9 927.4 Q616.9 927.4 618.4 931.5 L621.8 934.9" fill="none" stroke="#3b72a6" stroke-width="1.8"/><rect x="622.4" y="912.1" width="6" height="34" fill="#dfe6ee"/><path d="M621.8 911.8000000000001 H631.8 L634.8 916.8000000000001 L631.8 921.8000000000001 H621.8z" fill="url(#gPin)" stroke="#b8c8da" stroke-width="0.8"/><path d="M621.8 924.1 H631.8 L634.8 929.1 L631.8 934.1 H621.8z" fill="url(#gPin)" stroke="#b8c8da" stroke-width="0.8"/><path d="M621.8 936.3000000000001 H631.8 L634.8 941.3000000000001 L631.8 946.3000000000001 H621.8z" fill="url(#gPin)" stroke="#b8c8da" stroke-width="0.8"/><path d="M716.4 917.2 H726.4 L729.4 921.9000000000001 L726.4 926.7 H716.4z" fill="url(#gPout)" stroke="#d0d0c0" stroke-width="0.8"/><path d="M716.4 929.9 H726.4 L729.4 934.6 L726.4 939.4 H716.4z" fill="url(#gPout)" stroke="#d0d0c0" stroke-width="0.8"/><path d="M729.4 921.9 Q733.4 927.4 739.4 927.4" fill="none" stroke="#3b72a6" stroke-width="1.8"/><path d="M729.4 934.6 Q733.4 927.4 739.4 927.4" fill="none" stroke="#3b72a6" stroke-width="1.8"/><rect x="839.2" y="894.3" width="95" height="114" fill="url(#gBlk)" stroke="#86a9b8" stroke-width="1"/><rect x="839.2" y="894.3" width="95" height="1.6" fill="#8fa8bf"/><text x="886.2" y="907.5" font-family="Liberation Sans" font-weight="bold" font-size="12.5" text-anchor="middle" fill="#000">ifft1</text><use href="#gear" x="873.3000000000001" y="945.0"/><use href="#gear" x="894.6" y="940.1999999999999"/><use href="#gear" x="887.2" y="959.1999999999999"/><text x="886.2" y="977.0999999999999" font-family="Liberation Sans" font-weight="bold" font-size="10" text-anchor="middle" fill="#000">KPN</text><text x="886.2" y="985.9" font-family="Liberation Sans" font-weight="bold" font-size="8.8" text-anchor="middle" fill="#000">ifftTempl</text><path d="M819.7 951.1 Q826.7 951.1 828.2 948.0 L831.6 945.5" fill="none" stroke="#3b72a6" stroke-width="1.8"/><path d="M819.7 951.1 Q826.7 951.1 828.2 951.4 L831.6 951.6" fill="none" stroke="#3b72a6" stroke-width="1.8"/><path d="M819.7 951.1 Q826.7 951.1 828.2 955.2 L831.6 958.6" fill="none" stroke="#3b72a6" stroke-width="1.8"/><rect x="832.2" y="935.8" width="6" height="34" fill="#dfe6ee"/><path d="M831.6 935.5 H841.6 L844.6 940.5 L841.6 945.5 H831.6z" fill="url(#gPin)" stroke="#b8c8da" stroke-width="0.8"/><path d="M831.6 947.8 H841.6 L844.6 952.8 L841.6 957.8 H831.6z" fill="url(#gPin)" stroke="#b8c8da" stroke-width="0.8"/><path d="M831.6 960.0 H841.6 L844.6 965.0 L841.6 970.0 H831.6z" fill="url(#gPin)" stroke="#b8c8da" stroke-width="0.8"/><path d="M926.4000000000001 946.3 H936.4000000000001 L939.4000000000001 951.3 L936.4000000000001 956.3 H926.4000000000001z" fill="url(#gPout)" stroke="#d0d0c0" stroke-width="0.8"/><rect x="1049.2" y="894.3" width="95" height="114" fill="url(#gBlk)" stroke="#86a9b8" stroke-width="1"/><rect x="1049.2" y="894.3" width="95" height="1.6" fill="#8fa8bf"/><text x="1096.2" y="907.5" font-family="Liberation Sans" font-weight="bold" font-size="12.5" text-anchor="middle" fill="#000">chest1</text><use href="#gear" x="1083.3" y="945.0"/><use href="#gear" x="1104.6000000000001" y="940.1999999999999"/><use href="#gear" x="1097.2" y="959.1999999999999"/><text x="1096.2" y="977.0999999999999" font-family="Liberation Sans" font-weight="bold" font-size="10" text-anchor="middle" fill="#000">KPN</text><text x="1096.2" y="985.9" font-family="Liberation Sans" font-weight="bold" font-size="8.8" text-anchor="middle" fill="#000">chestTempl</text><path d="M1029.7 951.1 Q1036.7 951.1 1038.2 948.0 L1041.6000000000001 945.5" fill="none" stroke="#3b72a6" stroke-width="1.8"/><path d="M1029.7 951.1 Q1036.7 951.1 1038.2 951.4 L1041.6000000000001 951.6" fill="none" stroke="#3b72a6" stroke-width="1.8"/><path d="M1029.7 951.1 Q1036.7 951.1 1038.2 955.2 L1041.6000000000001 958.6" fill="none" stroke="#3b72a6" stroke-width="1.8"/><rect x="1042.2" y="935.8" width="6" height="34" fill="#dfe6ee"/><path d="M1041.6000000000001 935.5 H1051.6000000000001 L1054.6000000000001 940.5 L1051.6000000000001 945.5 H1041.6000000000001z" fill="url(#gPin)" stroke="#b8c8da" stroke-width="0.8"/><path d="M1041.6000000000001 947.8 H1051.6000000000001 L1054.6000000000001 952.8 L1051.6000000000001 957.8 H1041.6000000000001z" fill="url(#gPin)" stroke="#b8c8da" stroke-width="0.8"/><path d="M1041.6000000000001 960.0 H1051.6000000000001 L1054.6000000000001 965.0 L1051.6000000000001 970.0 H1041.6000000000001z" fill="url(#gPin)" stroke="#b8c8da" stroke-width="0.8"/><path d="M1136.2 940.9 H1146.2 L1149.2 945.6 L1146.2 950.4 H1136.2z" fill="url(#gPout)" stroke="#d0d0c0" stroke-width="0.8"/><path d="M1136.2 953.5999999999999 H1146.2 L1149.2 958.3 L1146.2 963.0999999999999 H1136.2z" fill="url(#gPout)" stroke="#d0d0c0" stroke-width="0.8"/><path d="M1149.2 945.6 Q1153.2 951.1 1159.2 951.1" fill="none" stroke="#3b72a6" stroke-width="1.8"/><path d="M1149.2 958.3 Q1153.2 951.1 1159.2 951.1" fill="none" stroke="#3b72a6" stroke-width="1.8"/><rect x="1259.3" y="987.5" width="95" height="114" fill="url(#gBlk)" stroke="#86a9b8" stroke-width="1"/><rect x="1259.3" y="987.5" width="95" height="1.6" fill="#8fa8bf"/><text x="1306.3" y="1000.7" font-family="Liberation Sans" font-weight="bold" font-size="12.5" text-anchor="middle" fill="#000">fft1</text><use href="#gear" x="1293.3999999999999" y="1038.2"/><use href="#gear" x="1314.7" y="1033.4"/><use href="#gear" x="1307.3" y="1052.4"/><text x="1306.3" y="1070.3" font-family="Liberation Sans" font-weight="bold" font-size="10" text-anchor="middle" fill="#000">KPN</text><text x="1306.3" y="1079.1" font-family="Liberation Sans" font-weight="bold" font-size="8.8" text-anchor="middle" fill="#000">fftTempl</text><path d="M1239.8 1044.3 Q1246.8 1044.3 1248.3 1041.2 L1251.7 1038.7" fill="none" stroke="#3b72a6" stroke-width="1.8"/><path d="M1239.8 1044.3 Q1246.8 1044.3 1248.3 1044.6 L1251.7 1044.8" fill="none" stroke="#3b72a6" stroke-width="1.8"/><path d="M1239.8 1044.3 Q1246.8 1044.3 1248.3 1048.4 L1251.7 1051.8" fill="none" stroke="#3b72a6" stroke-width="1.8"/><rect x="1252.3" y="1029.0" width="6" height="34" fill="#dfe6ee"/><path d="M1251.7 1028.7 H1261.7 L1264.7 1033.7 L1261.7 1038.7 H1251.7z" fill="url(#gPin)" stroke="#b8c8da" stroke-width="0.8"/><path d="M1251.7 1041.0 H1261.7 L1264.7 1046.0 L1261.7 1051.0 H1251.7z" fill="url(#gPin)" stroke="#b8c8da" stroke-width="0.8"/><path d="M1251.7 1053.2 H1261.7 L1264.7 1058.2 L1261.7 1063.2 H1251.7z" fill="url(#gPin)" stroke="#b8c8da" stroke-width="0.8"/><path d="M1346.5 1039.5 H1356.5 L1359.5 1044.5 L1356.5 1049.5 H1346.5z" fill="url(#gPout)" stroke="#d0d0c0" stroke-width="0.8"/><text x="944" y="481.2" font-family="Liberation Sans" font-weight="bold" font-size="8.7" fill="#111" stroke="#111" stroke-width="0.25">mf_power0</text><text x="786" y="570.2" font-family="Liberation Sans" font-weight="bold" font-size="8.7" fill="#111" stroke="#111" stroke-width="0.25">mf_power0</text><text x="773" y="579.2" font-family="Liberation Sans" font-weight="bold" font-size="8.7" fill="#111" stroke="#111" stroke-width="0.25">mf_ifft0</text><text x="982.6" y="602.2" font-family="Liberation Sans" font-weight="bold" font-size="8.7" fill="#111" stroke="#111" stroke-width="0.25">ifft_chest0</text><text x="1273.4" y="506.7" font-family="Liberation Sans" font-weight="bold" font-size="8.7" fill="#111" stroke="#111" stroke-width="0.25">mf_power0</text><text x="1201.9" y="659.4" font-family="Liberation Sans" font-weight="bold" font-size="8.7" fill="#111" stroke="#111" stroke-width="0.25">chest_fft0</text><text x="1364.7" y="672.4" font-family="Liberation Sans" font-weight="bold" font-size="8.7" fill="#111" stroke="#111" stroke-width="0.25">R_fft0</text><text x="786" y="746.2" font-family="Liberation Sans" font-weight="bold" font-size="8.7" fill="#111" stroke="#111" stroke-width="0.25">fftw</text><text x="872.3" y="769.0" font-family="Liberation Sans" font-weight="bold" font-size="8.7" fill="#111" stroke="#111" stroke-width="0.25">fftw</text><text x="953" y="792.0" font-family="Liberation Sans" font-weight="bold" font-size="8.7" fill="#111" stroke="#111" stroke-width="0.25">fftw</text><text x="735.8" y="814.2" font-family="Liberation Sans" font-weight="bold" font-size="8.7" fill="#111" stroke="#111" stroke-width="0.25">fftw fftw</text><text x="796.7" y="838.8" font-family="Liberation Sans" font-weight="bold" font-size="8.7" fill="#111" stroke="#111" stroke-width="0.25">mf_power1</text><text x="782.3" y="861.2" font-family="Liberation Sans" font-weight="bold" font-size="8.7" fill="#111" stroke="#111" stroke-width="0.25">fftw</text><text x="1008" y="838.6" font-family="Liberation Sans" font-weight="bold" font-size="8.7" fill="#111" stroke="#111" stroke-width="0.25">fftw</text><text x="1411.4" y="899.3" font-family="Liberation Sans" font-weight="bold" font-size="8.7" fill="#111" stroke="#111" stroke-width="0.25">fft_combine0</text><text x="1304" y="932.6" font-family="Liberation Sans" font-weight="bold" font-size="8.7" fill="#111" stroke="#111" stroke-width="0.25">R_fft1</text><text x="1201.7" y="970.2" font-family="Liberation Sans" font-weight="bold" font-size="8.7" fill="#111" stroke="#111" stroke-width="0.25">chest_fft1</text><text x="975.7" y="958.7" font-family="Liberation Sans" font-weight="bold" font-size="8.7" fill="#111" stroke="#111" stroke-width="0.25">ifft_chest1</text><text x="595" y="918.9" font-family="Liberation Sans" font-weight="bold" font-size="8.7" fill="#111" stroke="#111" stroke-width="0.25">nmbSc_chan</text><text x="595" y="976.2" font-family="Liberation Sans" font-weight="bold" font-size="8.7" fill="#111" stroke="#111" stroke-width="0.25">nmbSc chan</text><text x="591" y="1009.5" font-family="Liberation Sans" font-weight="bold" font-size="8.7" fill="#111" stroke="#111" stroke-width="0.25">mf_rs</text><text x="591" y="1027.2" font-family="Liberation Sans" font-weight="bold" font-size="8.7" fill="#111" stroke="#111" stroke-width="0.25">nmbSc chan</text><text x="529.7" y="1030.2" font-family="Liberation Sans" font-weight="bold" font-size="8.7" fill="#111" stroke="#111" stroke-width="0.25">mf_in0</text><text x="772.5" y="935.0" font-family="Liberation Sans" font-weight="bold" font-size="8.7" fill="#111" stroke="#111" stroke-width="0.25">mf_ifft1</text><text x="782" y="946.2" font-family="Liberation Sans" font-weight="bold" font-size="8.7" fill="#111" stroke="#111" stroke-width="0.25">fftw</text></g></svg>
<div class="a" style="left:0;top:1056px;width:1894px;height:24px;background:#f2f1f0"></div>
<svg class="a" style="left:4px;top:1062px" width="14" height="11" viewBox="0 0 14 11"><path d="M0.5 1.5 H4.5 L6 3 H11.5 V10.5 H0.5z" fill="#f7d9a0" stroke="#c59a4a"/><path d="M1.5 5 H13.5 L11.5 10.5 H0.5z" fill="#fbe6b8" stroke="#c59a4a" stroke-width="0.8"/></svg>
<div class="t ui" style="left:19px;top:1059px;font-size:17.3px">lte_benchmark/kpnana/analysis_inputs</div>
<svg class="a" style="left:1873px;top:1064px" width="13" height="9" viewBox="0 0 13 9"><rect x="0.5" y="0.5" width="8" height="5" fill="#cfe0cf" stroke="#7a9a7a"/><rect x="2.5" y="2.5" width="10" height="6" fill="#dff0ff" stroke="#7a9aaa"/><rect x="4" y="4" width="5" height="3" fill="#3aa04a"/></svg>
</body></html>
